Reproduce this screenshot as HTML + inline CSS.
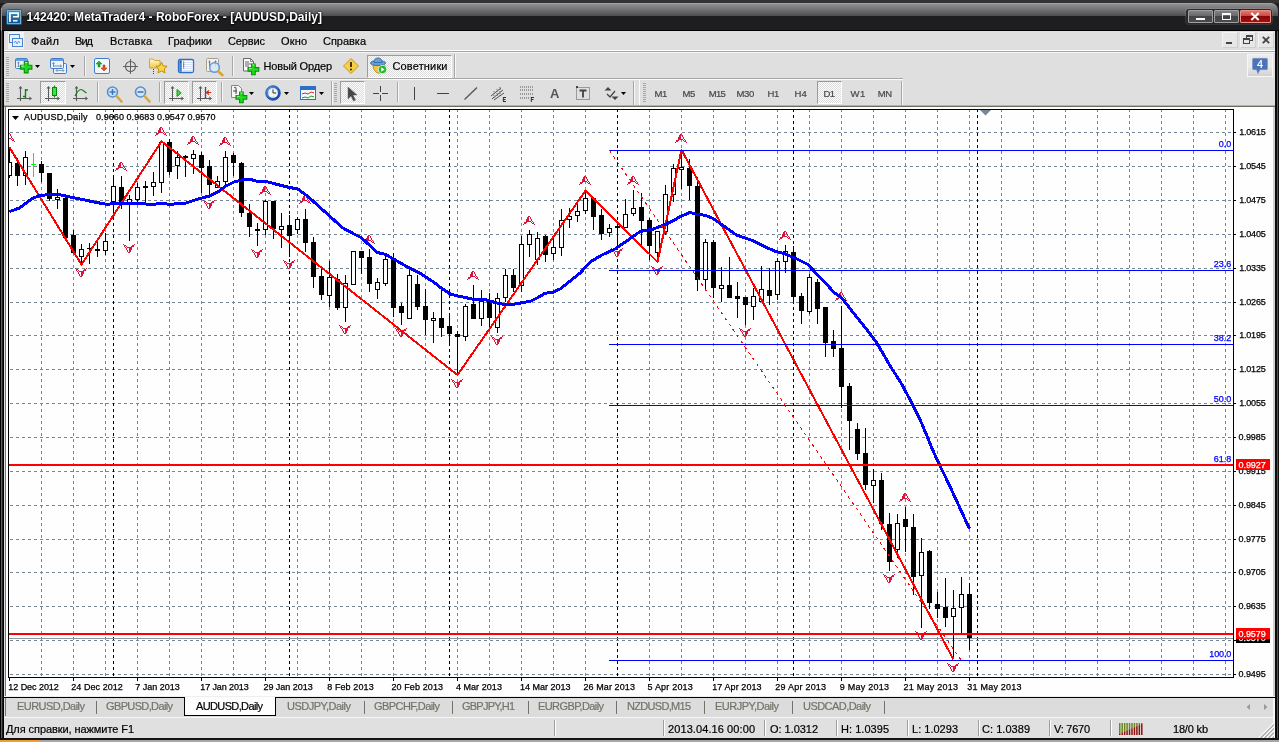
<!DOCTYPE html><html><head><meta charset="utf-8"><title>MT4</title><style>
html,body{margin:0;padding:0}body{width:1279px;height:742px;overflow:hidden;position:relative;background:#1f1f21;font-family:"Liberation Sans",sans-serif;}
div{box-sizing:border-box}
</style></head><body><div id="w" style="position:absolute;left:0;top:0;width:1279px;height:742px;opacity:0.999">
<div style="position:absolute;left:0px;top:0px;width:1279px;height:3px;background:#353535;"></div>
<div style="position:absolute;left:0px;top:3px;width:1279px;height:28px;background:#1f1f21;border-radius:7px 7px 0 0;"></div>
<svg style="position:absolute;left:0;top:3px" width="1279" height="14" viewBox="0 0 1279 14"><defs><linearGradient id="tg" x1="0" y1="0" x2="0" y2="1"><stop offset="0" stop-color="#929294"/><stop offset="1" stop-color="#4e4e50"/></linearGradient><clipPath id="tc"><rect x="1" y="0" width="1277" height="40" rx="7"/></clipPath></defs><g clip-path="url(#tc)"><path d="M0 1H1279V13H0Z" fill="url(#tg)"/><rect x="0" y="0" width="1279" height="1" fill="#a2a2a4"/></g></svg>
<div style="position:absolute;left:0px;top:30px;width:1279px;height:1px;background:#000;"></div>
<svg style="position:absolute;left:6px;top:9px" width="16" height="16" viewBox="0 0 16 16"><defs><linearGradient id="ig" x1="0" y1="0" x2="0" y2="1"><stop offset="0" stop-color="#4a98c8"/><stop offset="1" stop-color="#0c4c84"/></linearGradient></defs><rect x="0.5" y="0.5" width="15" height="15" rx="1" fill="url(#ig)" stroke="#1c5c8c"/><rect x="1.5" y="1.5" width="13" height="13" fill="none" stroke="#8cc4e4" stroke-opacity="0.8"/><path d="M3 13V3.300H13V8.600H7V7H11.400V5H4.800V13Z" fill="#fff"/><rect x="7" y="11" width="4.500" height="1.600" fill="#e8f4ff"/></svg>
<div style="position:absolute;left:1186px;top:9px;width:86px;height:15px;background:#2a2a2c;border-radius:3px;box-shadow:0 0 0 1px rgba(255,255,255,.10)"></div>
<div style="position:absolute;left:1188px;top:10px;width:25px;height:13px;background:linear-gradient(#838386,#68686a 46%,#454547 50%,#4c4c4e);border:1px solid #a2a2a4;border-radius:1px"></div><div style="position:absolute;left:1196px;top:18px;width:9px;height:2px;background:#fff"></div>
<div style="position:absolute;left:1214px;top:10px;width:25px;height:13px;background:linear-gradient(#838386,#68686a 46%,#454547 50%,#4c4c4e);border:1px solid #a2a2a4;border-radius:1px"></div><div style="position:absolute;left:1222px;top:13px;width:9px;height:7px;border:1px solid #fff;border-top-width:2px"></div>
<div style="position:absolute;left:1240px;top:10px;width:31px;height:13px;background:linear-gradient(#e07a70,#c84a40 46%,#8c0806 50%,#9a1410);border:1px solid #f09088;border-radius:1px"></div><svg style="position:absolute;left:1250px;top:12px" width="10" height="9" viewBox="0 0 10 9"><path d="M1.300 1L8.700 8M8.700 1L1.300 8" stroke="#fff" stroke-width="2"/></svg>
<div style="position:absolute;left:4px;top:31px;width:1271px;height:707px;background:#e0e0e0;"></div>
<div style="position:absolute;left:1px;top:8px;width:1px;height:730px;background:#5e5e60;"></div>
<div style="position:absolute;left:1px;top:8px;width:1px;height:23px;background:#98989a;"></div>
<div style="position:absolute;left:0px;top:31px;width:1px;height:711px;background:#000;"></div>
<div style="position:absolute;left:3px;top:31px;width:1px;height:707px;background:#000;"></div>
<div style="position:absolute;left:1275px;top:31px;width:4px;height:711px;background:#0c0c0c;"></div>
<div style="position:absolute;left:1277px;top:31px;width:1px;height:707px;background:#58585a;"></div>
<div style="position:absolute;left:0px;top:738px;width:1279px;height:4px;background:#141414;"></div>
<div style="position:absolute;left:0px;top:740px;width:1279px;height:2px;background:#a8a8a8;"></div>
<div style="position:absolute;left:0px;top:740px;width:39px;height:2px;background:#f0a030;"></div>
<div style="position:absolute;left:4px;top:50px;width:1271px;height:1px;background:#fff;"></div>
<div style="position:absolute;left:4px;top:51px;width:1271px;height:1px;background:#a6a6a6;"></div>
<div style="position:absolute;left:4px;top:52px;width:1271px;height:1px;background:#f6f6f6;"></div>
<div style="position:absolute;left:8px;top:32px;width:16px;height:17px;background:#f4f4f4;"></div>
<svg style="position:absolute;left:8px;top:33px" width="16" height="16" viewBox="0 0 16 16"><rect x="1.5" y="1.5" width="10" height="8" fill="#eaf2ff" stroke="#4a86d8"/><rect x="4.5" y="5.5" width="10" height="8" fill="#eaf2ff" stroke="#4a86d8"/><path d="M6 10l1.5-2 1.5 3 1.5-3 1.5 2" stroke="#4a86d8" fill="none" stroke-width="0.8"/></svg>
<div style="position:absolute;left:1222px;top:32px;width:16px;height:16px;background:#e8e8e8;border:1px solid #f4f4f4;border-right-color:#d0d0d0;border-bottom-color:#d0d0d0"></div><div style="position:absolute;left:1226px;top:42px;width:6px;height:2px;background:#444"></div>
<div style="position:absolute;left:1240px;top:32px;width:16px;height:16px;background:#e8e8e8;border:1px solid #f4f4f4;border-right-color:#d0d0d0;border-bottom-color:#d0d0d0"></div><div style="position:absolute;left:1246px;top:35px;width:7px;height:6px;border:1px solid #444;border-top-width:2px"></div><div style="position:absolute;left:1243px;top:38px;width:7px;height:6px;border:1px solid #444;border-top-width:2px;background:#e8e8e8"></div>
<div style="position:absolute;left:1258px;top:32px;width:16px;height:16px;background:#e8e8e8;border:1px solid #f4f4f4;border-right-color:#d0d0d0;border-bottom-color:#d0d0d0"></div><svg style="position:absolute;left:1262px;top:36px" width="8" height="8" viewBox="0 0 8 8"><path d="M0.8 0.8L7.2 7.2M7.2 0.8L0.8 7.2" stroke="#444" stroke-width="1.8"/></svg>
<div style="position:absolute;left:4px;top:78px;width:899px;height:1px;background:#a6a6a6;"></div>
<div style="position:absolute;left:4px;top:79px;width:899px;height:1px;background:#fbfbfb;"></div>
<div style="position:absolute;left:4px;top:105px;width:1271px;height:1px;background:#b4b4b4;"></div>
<div style="position:absolute;left:4px;top:106px;width:1271px;height:1px;background:#6e6e62;"></div>
<div style="position:absolute;left:6px;top:57px;width:3px;height:20px;background:repeating-linear-gradient(#a8a8a8 0 1px,transparent 1px 2px)"></div>
<div style="position:absolute;left:6px;top:83px;width:3px;height:20px;background:repeating-linear-gradient(#a8a8a8 0 1px,transparent 1px 2px)"></div>
<div style="position:absolute;left:334px;top:83px;width:3px;height:20px;background:repeating-linear-gradient(#a8a8a8 0 1px,transparent 1px 2px)"></div>
<div style="position:absolute;left:643px;top:83px;width:3px;height:20px;background:repeating-linear-gradient(#a8a8a8 0 1px,transparent 1px 2px)"></div>
<div style="position:absolute;left:84px;top:56px;width:1px;height:20px;background:#a8a8a8;"></div><div style="position:absolute;left:85px;top:56px;width:1px;height:20px;background:#f8f8f8;"></div>
<div style="position:absolute;left:232px;top:56px;width:1px;height:20px;background:#a8a8a8;"></div><div style="position:absolute;left:233px;top:56px;width:1px;height:20px;background:#f8f8f8;"></div>
<div style="position:absolute;left:97px;top:82px;width:1px;height:20px;background:#a8a8a8;"></div><div style="position:absolute;left:98px;top:82px;width:1px;height:20px;background:#f8f8f8;"></div>
<div style="position:absolute;left:159px;top:82px;width:1px;height:20px;background:#a8a8a8;"></div><div style="position:absolute;left:160px;top:82px;width:1px;height:20px;background:#f8f8f8;"></div>
<div style="position:absolute;left:221px;top:82px;width:1px;height:20px;background:#a8a8a8;"></div><div style="position:absolute;left:222px;top:82px;width:1px;height:20px;background:#f8f8f8;"></div>
<div style="position:absolute;left:397px;top:82px;width:1px;height:20px;background:#a8a8a8;"></div><div style="position:absolute;left:398px;top:82px;width:1px;height:20px;background:#f8f8f8;"></div>
<div style="position:absolute;left:454px;top:54px;width:1px;height:24px;background:#a8a8a8;"></div><div style="position:absolute;left:455px;top:54px;width:1px;height:24px;background:#f8f8f8;"></div>
<div style="position:absolute;left:331px;top:81px;width:1px;height:24px;background:#a8a8a8;"></div><div style="position:absolute;left:332px;top:81px;width:1px;height:24px;background:#f8f8f8;"></div>
<div style="position:absolute;left:633px;top:81px;width:1px;height:24px;background:#a8a8a8;"></div><div style="position:absolute;left:634px;top:81px;width:1px;height:24px;background:#f8f8f8;"></div>
<div style="position:absolute;left:901px;top:81px;width:1px;height:24px;background:#a8a8a8;"></div><div style="position:absolute;left:902px;top:81px;width:1px;height:24px;background:#f8f8f8;"></div>
<div style="position:absolute;left:639px;top:80px;width:1px;height:25px;background:#fbfbfb;"></div>
<div style="position:absolute;left:40px;top:81px;width:26px;height:23px;border:1px solid #9c9c9c;border-right-color:#fff;border-bottom-color:#fff;background:repeating-conic-gradient(#fff 0 25%,#dcdcdc 0 50%) 0 0/2px 2px"></div>
<div style="position:absolute;left:164px;top:81px;width:25px;height:23px;border:1px solid #9c9c9c;border-right-color:#fff;border-bottom-color:#fff;background:repeating-conic-gradient(#fff 0 25%,#dcdcdc 0 50%) 0 0/2px 2px"></div>
<div style="position:absolute;left:192px;top:81px;width:25px;height:23px;border:1px solid #9c9c9c;border-right-color:#fff;border-bottom-color:#fff;background:repeating-conic-gradient(#fff 0 25%,#dcdcdc 0 50%) 0 0/2px 2px"></div>
<div style="position:absolute;left:340px;top:81px;width:25px;height:23px;border:1px solid #9c9c9c;border-right-color:#fff;border-bottom-color:#fff;background:repeating-conic-gradient(#fff 0 25%,#dcdcdc 0 50%) 0 0/2px 2px"></div>
<div style="position:absolute;left:817px;top:81px;width:25px;height:23px;border:1px solid #9c9c9c;border-right-color:#fff;border-bottom-color:#fff;background:repeating-conic-gradient(#fff 0 25%,#dcdcdc 0 50%) 0 0/2px 2px"></div>
<div style="position:absolute;left:367px;top:55px;width:85px;height:23px;border:1px solid #9c9c9c;border-right-color:#fff;border-bottom-color:#fff;background:repeating-conic-gradient(#fff 0 25%,#dcdcdc 0 50%) 0 0/2px 2px"></div>
<svg style="position:absolute;left:35px;top:65px" width="5" height="3" viewBox="0 0 5 3"><path d="M0 0H5L2.5 3Z" fill="#000"/></svg>
<svg style="position:absolute;left:70px;top:65px" width="5" height="3" viewBox="0 0 5 3"><path d="M0 0H5L2.5 3Z" fill="#000"/></svg>
<svg style="position:absolute;left:249px;top:92px" width="5" height="3" viewBox="0 0 5 3"><path d="M0 0H5L2.5 3Z" fill="#000"/></svg>
<svg style="position:absolute;left:284px;top:92px" width="5" height="3" viewBox="0 0 5 3"><path d="M0 0H5L2.5 3Z" fill="#000"/></svg>
<svg style="position:absolute;left:319px;top:92px" width="5" height="3" viewBox="0 0 5 3"><path d="M0 0H5L2.5 3Z" fill="#000"/></svg>
<svg style="position:absolute;left:621px;top:92px" width="5" height="3" viewBox="0 0 5 3"><path d="M0 0H5L2.5 3Z" fill="#000"/></svg>
<svg style="position:absolute;left:15px;top:58px;overflow:visible" width="16" height="16" viewBox="0 0 16 16"><rect x="0.5" y="0.5" width="12" height="10" rx="1.2" fill="#eef4fc" stroke="#3f7fd0"/><rect x="1" y="1" width="11" height="2" fill="#6a9ee0"/><path d="M3.500 4v5M2.300 5.200l1.200-1.200 1.200 1.200M2.300 7.800l1.200 1.200 1.200-1.200" stroke="#6a86a8" fill="none" stroke-width="0.900"/><path transform="translate(5.5 3.5) scale(0.95)" d="M0 4h4v-4h4v4h4v4h-4v4h-4v-4h-4z" fill="#22dd22" stroke="#0a8f0a" stroke-width="1.2"/><path transform="translate(5.5 3.5) scale(0.95)" d="M4.800 1h2.400M1 4.800h3" stroke="#b8ffb8" stroke-width="1" fill="none"/></svg>
<svg style="position:absolute;left:50px;top:58px;overflow:visible" width="18" height="16" viewBox="0 0 18 16"><rect x="3.500" y="5.500" width="13" height="10" rx="1.200" fill="#eef4fc" stroke="#3f7fd0"/><path d="M6 12.500h8M7.500 11l-1.500 1.500 1.500 1.500M12.500 11l1.500 1.500-1.500 1.500" stroke="#7a96b8" fill="none" stroke-width="0.900"/><rect x="0.500" y="0.500" width="13" height="10" rx="1.200" fill="#eef4fc" stroke="#3f7fd0"/><rect x="1" y="1" width="12" height="2" fill="#6a9ee0"/><path d="M3.500 4.500v4.500M2.300 5.700l1.200-1.200 1.200 1.200M3.500 8h8M10 6.700l1.500 1.300-1.500 1.300" stroke="#6a86a8" fill="none" stroke-width="0.900"/></svg>
<svg style="position:absolute;left:94px;top:58px;overflow:visible" width="16" height="16" viewBox="0 0 16 16"><rect x="0.5" y="0.5" width="15" height="15" rx="1.5" fill="#f4f8ff" stroke="#3f7fd0"/><path d="M5 3l3 3h-2v3h-2v-3h-2z" fill="#22b322" stroke="#0a7a0a" stroke-width="0.5"/><path d="M10 13l-3-3h2v-3h2v3h2z" fill="#f05020" stroke="#a03010" stroke-width="0.5"/></svg>
<svg style="position:absolute;left:123px;top:59px;overflow:visible" width="15" height="15" viewBox="0 0 15 15"><circle cx="7.500" cy="7.500" r="5" fill="none" stroke="#606060" stroke-width="1.100"/><path d="M7.500 0v15M0 7.500h15" stroke="#606060" stroke-width="1"/></svg>
<svg style="position:absolute;left:149px;top:57px;overflow:visible" width="19" height="17" viewBox="0 0 19 17"><defs><linearGradient id="fg" x1="0" y1="0" x2="0" y2="1"><stop offset="0" stop-color="#fffbd0"/><stop offset="1" stop-color="#f2c84a"/></linearGradient></defs><path d="M0.500 2h3.500l1.500 1.500h5.500v7.500h-10.500z" fill="url(#fg)" stroke="#d0a838"/><path d="M12.500 5.200l1.700 3.600 3.900 0.500-2.900 2.700 0.800 3.900-3.500-2-3.500 2 0.800-3.900-2.900-2.700 3.900-0.500z" fill="#fad648" stroke="#b8860b" stroke-width="0.900"/><path d="M4.500 12v5" stroke="#444" stroke-dasharray="1 1"/></svg>
<svg style="position:absolute;left:178px;top:59px;overflow:visible" width="16" height="14" viewBox="0 0 16 14"><rect x="0.500" y="0.500" width="15" height="13" rx="1.500" fill="#fff" stroke="#2f6fc8" stroke-width="1.300"/><rect x="1.200" y="1.200" width="2.600" height="11.600" fill="#3f7fd8"/><path d="M5 3.500h9.500M5 5.500h9.500M5 7.500h9.500M5 9.500h9.500M5 11.500h9.500" stroke="#c8daf4" stroke-width="0.800"/><path d="M5 3h1.200M5 9h1.200" stroke="#e02020" stroke-width="1.200"/><path d="M5 5h1.200M5 7h1.200M2 3h1.200" stroke="#222" stroke-width="1.200"/></svg>
<svg style="position:absolute;left:206px;top:58px;overflow:visible" width="18" height="18" viewBox="0 0 18 18"><rect x="0.500" y="0.500" width="12" height="13" rx="1" fill="#f4f2ec" stroke="#a8a090"/><path d="M3.500 2.500v7M9.500 2.500v6M2.500 4h2M8.500 3.500h2" stroke="#5878a8" stroke-width="0.900"/><circle cx="8.500" cy="9.500" r="4.800" fill="#d4e8f8" fill-opacity="0.850" stroke="#6a9ad8" stroke-width="1.500"/><path d="M12.200 13.200l4.300 4" stroke="#d8a828" stroke-width="2.600" stroke-linecap="round"/></svg>
<svg style="position:absolute;left:243px;top:58px;overflow:visible" width="16" height="16" viewBox="0 0 16 16"><path d="M0.500 0.500h7l3 3v9.500h-10z" fill="#fafafa" stroke="#6a6a6a"/><path d="M7.500 0.500v3h3" fill="none" stroke="#6a6a6a" stroke-width="0.800"/><path d="M2 4h4M2 6h6.500M2 8h4" stroke="#555" stroke-width="0.900"/><path transform="translate(5 6) scale(0.9)" d="M0 4h4v-4h4v4h4v4h-4v4h-4v-4h-4z" fill="#22dd22" stroke="#0a8f0a" stroke-width="1.2"/><path transform="translate(5 6) scale(0.9)" d="M4.800 1h2.400M1 4.800h3" stroke="#b8ffb8" stroke-width="1" fill="none"/></svg>
<svg style="position:absolute;left:343px;top:58px;overflow:visible" width="16" height="16" viewBox="0 0 16 16"><path d="M8 0.500l7.500 7.500-7.500 7.500-7.500-7.500z" fill="#f8d048" stroke="#c89818"/><path d="M8 4v5" stroke="#503000" stroke-width="2"/><circle cx="8" cy="11.500" r="1.100" fill="#503000"/></svg>
<svg style="position:absolute;left:370px;top:57px;overflow:visible" width="17" height="17" viewBox="0 0 17 17"><path d="M3 8c0 5 3 8 6 8s6-3 6-8z" fill="#f0c848" stroke="#b89020"/><ellipse cx="8" cy="6" rx="7.500" ry="2.500" fill="#6aa0d8" stroke="#3870b0"/><path d="M4 5.500c0-3 1.500-4.500 4-4.500s4 1.500 4 4.500z" fill="#6aa0d8" stroke="#3870b0"/><circle cx="12.500" cy="12.500" r="4.200" fill="#28b828" stroke="#e8ffe8" stroke-width="0.800"/><path d="M11.200 10.300l3.400 2.200-3.400 2.200z" fill="#fff"/></svg>
<div style="position:absolute;left:1247px;top:54px;width:26px;height:23px;background:linear-gradient(#ececec 55%,#d2d2d2);border:1px solid #f8f8f8"></div>
<svg style="position:absolute;left:1252px;top:58px;overflow:visible" width="16" height="16" viewBox="0 0 16 16"><path d="M1.500 0.300h13a1 1 0 0 1 1 1v9.400a1 1 0 0 1-1 1h-6.500l-2 4-1.500-4h-3a1 1 0 0 1-1-1v-9.400a1 1 0 0 1 1-1z" fill="#4e74b8" stroke="#7a98cc" stroke-width="0.600"/></svg>
<svg style="position:absolute;left:17px;top:86px;overflow:visible" width="16" height="16" viewBox="0 0 16 16"><path d="M3.500 1v14M0 12.500h14" fill="none" stroke="#5a5a5a" stroke-width="1.100"/><path d="M3.500 0l2 2.600h-4zM15 12.500l-2.600 2v-4z" fill="#5a5a5a"/><path d="M8.500 3v9M8.500 4h2.500M6 10.500h2.500" stroke="#0a8a0a" stroke-width="1.400" fill="none"/></svg>
<svg style="position:absolute;left:45px;top:86px;overflow:visible" width="16" height="16" viewBox="0 0 16 16"><path d="M3.500 1v14M0 12.500h14" fill="none" stroke="#5a5a5a" stroke-width="1.100"/><path d="M3.500 0l2 2.600h-4zM15 12.500l-2.600 2v-4z" fill="#5a5a5a"/><path d="M9.500 -0.500v12" stroke="#0a8a0a" stroke-width="1.200"/><rect x="7.500" y="1.500" width="4" height="8" fill="#40e050" stroke="#0a8a0a"/></svg>
<svg style="position:absolute;left:73px;top:86px;overflow:visible" width="16" height="16" viewBox="0 0 16 16"><path d="M3.500 1v14M0 12.500h14" fill="none" stroke="#5a5a5a" stroke-width="1.100"/><path d="M3.500 0l2 2.600h-4zM15 12.500l-2.600 2v-4z" fill="#5a5a5a"/><path d="M2 10c2-4 4-6.500 6-6.500s3 2 5.500 3.500" stroke="#0a8a0a" stroke-width="1.200" fill="none"/></svg>
<svg style="position:absolute;left:106px;top:86px;overflow:visible" width="17" height="17" viewBox="0 0 17 17"><circle cx="6.500" cy="6" r="5" fill="#d4e6f8" stroke="#5a90d0" stroke-width="1.600"/><path d="M3.500 6h6M6.500 3v6" stroke="#3a78c8" stroke-width="1.600"/><path d="M10.500 10l5 5.500" stroke="#d8a838" stroke-width="2.600" stroke-linecap="round"/></svg>
<svg style="position:absolute;left:134px;top:86px;overflow:visible" width="17" height="17" viewBox="0 0 17 17"><circle cx="6.500" cy="6" r="5" fill="#d4e6f8" stroke="#5a90d0" stroke-width="1.600"/><path d="M3.500 6h6" stroke="#3a78c8" stroke-width="1.600"/><path d="M10.500 10l5 5.500" stroke="#d8a838" stroke-width="2.600" stroke-linecap="round"/></svg>
<svg style="position:absolute;left:169px;top:86px;overflow:visible" width="16" height="16" viewBox="0 0 16 16"><path d="M3.500 1v14M0 12.500h14" fill="none" stroke="#5a5a5a" stroke-width="1.100"/><path d="M3.500 0l2 2.600h-4zM15 12.500l-2.600 2v-4z" fill="#5a5a5a"/><path d="M8 3.500l4.200 3.500-4.200 3.500z" fill="#48dc48" stroke="#0a8a0a" stroke-width="0.900"/></svg>
<svg style="position:absolute;left:197px;top:86px;overflow:visible" width="16" height="16" viewBox="0 0 16 16"><path d="M3.500 1v14M0 12.500h14" fill="none" stroke="#5a5a5a" stroke-width="1.100"/><path d="M3.500 0l2 2.600h-4zM15 12.500l-2.600 2v-4z" fill="#5a5a5a"/><path d="M8.500 1v11" stroke="#2060a0" stroke-width="1.400"/><path d="M14 6.500h-4M12 4.500l-2.500 2 2.500 2" stroke="#d03010" stroke-width="1.200" fill="none"/></svg>
<svg style="position:absolute;left:231px;top:85px;overflow:visible" width="16" height="16" viewBox="0 0 16 16"><path d="M0.500 0.500h7l3 3v9h-10z" fill="#f8f8f8" stroke="#888"/><path d="M3 3c1-1 2-1 2 0v6M2 6h4" stroke="#333" stroke-width="0.900" fill="none"/><path transform="translate(5 7) scale(0.9)" d="M0 4h4v-4h4v4h4v4h-4v4h-4v-4h-4z" fill="#22dd22" stroke="#0a8f0a" stroke-width="1.2"/><path transform="translate(5 7) scale(0.9)" d="M4.800 1h2.400M1 4.800h3" stroke="#b8ffb8" stroke-width="1" fill="none"/></svg>
<svg style="position:absolute;left:265px;top:85px;overflow:visible" width="16" height="16" viewBox="0 0 16 16"><defs><linearGradient id="cg" x1="0" y1="0" x2="1" y2="1"><stop offset="0" stop-color="#6ab0f8"/><stop offset="0.5" stop-color="#2a6ad0"/><stop offset="1" stop-color="#0c3a98"/></linearGradient></defs><circle cx="8" cy="8" r="7.300" fill="url(#cg)" stroke="#1a4aa0" stroke-width="0.800"/><circle cx="8" cy="8" r="5" fill="#f6f6f6"/><path d="M8 3.600v0.800M8 11.600v0.800M3.600 8h0.800M11.600 8h0.800" stroke="#888" stroke-width="0.800"/><path d="M8 4.500v3.500h3" stroke="#333" stroke-width="1" fill="none"/></svg>
<svg style="position:absolute;left:300px;top:86px;overflow:visible" width="16" height="16" viewBox="0 0 16 16"><rect x="0.500" y="0.500" width="15" height="13" fill="#f4f8ff" stroke="#2f6fc8"/><rect x="1" y="1" width="14" height="3" fill="#2f6fc8"/><path d="M2 8l3-1 3 1 3-2 3 1" stroke="#d03010" fill="none"/><path d="M2 12l3-1 3 1 3-2 3 1" stroke="#18a018" fill="none"/></svg>
<svg style="position:absolute;left:347px;top:87px;overflow:visible" width="10" height="15" viewBox="0 0 10 15"><path d="M1 0v12l3-3 2.500 5 2-1-2.500-5h4z" fill="#484848" stroke="#666" stroke-width="0.500"/></svg>
<svg style="position:absolute;left:373px;top:86px;overflow:visible" width="15" height="15" viewBox="0 0 15 15"><path d="M7.500 0v6M7.500 9v6M0 7.500h6M9 7.500h6" stroke="#444" stroke-width="1"/></svg>
<div style="position:absolute;left:414px;top:87px;width:1px;height:13px;background:#444;"></div>
<div style="position:absolute;left:437px;top:93px;width:12px;height:1px;background:#444;"></div>
<svg style="position:absolute;left:464px;top:87px;overflow:visible" width="14" height="13" viewBox="0 0 14 13"><path d="M0.500 12.500L13 0.500" stroke="#555" stroke-width="1.300"/></svg>
<svg style="position:absolute;left:490px;top:85px;overflow:visible" width="17" height="17" viewBox="0 0 17 17"><path d="M1 11L11 3M2 14L13 5M4 15L14 8" stroke="#555" stroke-width="1"/><path d="M4 6v8M7 4v8M10 2v9" stroke="#555" stroke-width="0.800" stroke-dasharray="1 1"/><path d="M13 12.500h3M13 14.500h2.500M13 16.500h3M13.300 12.500v4" stroke="#333" stroke-width="1" fill="none"/></svg>
<svg style="position:absolute;left:520px;top:86px;overflow:visible" width="15" height="16" viewBox="0 0 15 16"><path d="M0 1h13M0 4h13M0 8h13M0 12h9" stroke="#555" stroke-width="1" stroke-dasharray="1 1"/><path d="M11.300 11v5M11 11.500h3M11 13.500h2.500" stroke="#333" stroke-width="1" fill="none"/></svg>
<svg style="position:absolute;left:576px;top:86px;overflow:visible" width="14" height="14" viewBox="0 0 14 14"><rect x="0.500" y="1.500" width="13" height="12" fill="none" stroke="#555" stroke-dasharray="1 1"/><path d="M3.500 4.500h7M7 4.500v7" stroke="#444" stroke-width="1.800"/><rect x="0" y="0" width="2" height="2" fill="#444"/></svg>
<svg style="position:absolute;left:604px;top:87px;overflow:visible" width="15" height="13" viewBox="0 0 15 13"><path d="M4 0l3.500 3.500h-7zM11 13l-3.500-3.500h7z" fill="#444"/><path d="M3 7l3 3 5-6" stroke="#444" stroke-width="1.300" fill="none"/></svg>
<div style="position:absolute;left:5px;top:107px;width:1px;height:589px;background:#78786a;"></div>
<div style="position:absolute;left:6px;top:107px;width:1267px;height:589px;background:#fff;"></div>
<div style="position:absolute;left:1273px;top:107px;width:2px;height:631px;background:#d0d0d0;"></div>
<div style="position:absolute;left:8px;top:109px;width:1226px;height:1px;background:#000;"></div>
<div style="position:absolute;left:8px;top:109px;width:1px;height:569px;background:#000;"></div>
<div style="position:absolute;left:1233px;top:109px;width:1px;height:569px;background:#000;"></div>
<div style="position:absolute;left:8px;top:677px;width:1226px;height:1px;background:#000;"></div>
<svg width="1279" height="742" viewBox="0 0 1279 742" style="position:absolute;left:0;top:0">
<defs><clipPath id="cc"><rect x="9" y="110" width="1224" height="567"/></clipPath></defs>
<g clip-path="url(#cc)">
<g shape-rendering="crispEdges" stroke="#778899" stroke-width="1" stroke-dasharray="3 3" fill="none">
<path d="M41.5 109V677"/>
<path d="M73.5 109V677"/>
<path d="M105.5 109V677"/>
<path d="M137.5 109V677"/>
<path d="M169.5 109V677"/>
<path d="M201.5 109V677"/>
<path d="M233.5 109V677"/>
<path d="M265.5 109V677"/>
<path d="M297.5 109V677"/>
<path d="M329.5 109V677"/>
<path d="M361.5 109V677"/>
<path d="M393.5 109V677"/>
<path d="M425.5 109V677"/>
<path d="M457.5 109V677"/>
<path d="M489.5 109V677"/>
<path d="M521.5 109V677"/>
<path d="M553.5 109V677"/>
<path d="M585.5 109V677"/>
<path d="M617.5 109V677"/>
<path d="M649.5 109V677"/>
<path d="M681.5 109V677"/>
<path d="M713.5 109V677"/>
<path d="M745.5 109V677"/>
<path d="M777.5 109V677"/>
<path d="M809.5 109V677"/>
<path d="M841.5 109V677"/>
<path d="M873.5 109V677"/>
<path d="M905.5 109V677"/>
<path d="M937.5 109V677"/>
<path d="M969.5 109V677"/>
<path d="M1001.5 109V677"/>
<path d="M1033.5 109V677"/>
<path d="M1065.5 109V677"/>
<path d="M1097.5 109V677"/>
<path d="M1129.5 109V677"/>
<path d="M1161.5 109V677"/>
<path d="M1193.5 109V677"/>
<path d="M1225.5 109V677"/>
<path d="M10 132.5H1233"/>
<path d="M10 166.5H1233"/>
<path d="M10 200.5H1233"/>
<path d="M10 234.5H1233"/>
<path d="M10 268.5H1233"/>
<path d="M10 302.5H1233"/>
<path d="M10 335.5H1233"/>
<path d="M10 369.5H1233"/>
<path d="M10 403.5H1233"/>
<path d="M10 437.5H1233"/>
<path d="M10 471.5H1233"/>
<path d="M10 505.5H1233"/>
<path d="M10 539.5H1233"/>
<path d="M10 572.5H1233"/>
<path d="M10 606.5H1233"/>
<path d="M10 640.5H1233"/>
<path d="M10 674.5H1233"/>
</g>
<g shape-rendering="crispEdges" stroke="#000" stroke-width="1" stroke-dasharray="3 3" fill="none">
<path d="M113.5 109V677"/>
<path d="M289.5 109V677"/>
<path d="M449.5 109V677"/>
<path d="M617.5 109V677"/>
<path d="M793.5 109V677"/>
<path d="M977.5 109V677"/>
</g>
<rect x="9" y="638" width="1224" height="1" fill="#8c98a4" shape-rendering="crispEdges"/>
<g shape-rendering="crispEdges">
<rect x="9" y="148" width="1" height="30" fill="#000"/>
<rect x="9" y="162" width="3" height="14" fill="#000"/>
<rect x="9" y="163" width="2" height="12" fill="#fff"/>
<rect x="17" y="158" width="1" height="28" fill="#000"/>
<rect x="15" y="163" width="5" height="13" fill="#000"/>
<rect x="25" y="151" width="1" height="34" fill="#000"/>
<rect x="23" y="157" width="5" height="19" fill="#000"/>
<rect x="24" y="158" width="3" height="17" fill="#fff"/>
<rect x="33" y="153" width="1" height="24" fill="#00ff00"/>
<rect x="31" y="164" width="5" height="1" fill="#00ff00"/>
<rect x="41" y="161" width="1" height="21" fill="#000"/>
<rect x="39" y="164" width="5" height="9" fill="#000"/>
<rect x="49" y="173" width="1" height="28" fill="#000"/>
<rect x="47" y="173" width="5" height="26" fill="#000"/>
<rect x="57" y="189" width="1" height="20" fill="#000"/>
<rect x="55" y="197" width="5" height="3" fill="#000"/>
<rect x="56" y="198" width="3" height="1" fill="#fff"/>
<rect x="65" y="198" width="1" height="42" fill="#000"/>
<rect x="63" y="198" width="5" height="40" fill="#000"/>
<rect x="73" y="230" width="1" height="23" fill="#000"/>
<rect x="71" y="235" width="5" height="18" fill="#000"/>
<rect x="81" y="244" width="1" height="20" fill="#000"/>
<rect x="79" y="249" width="5" height="8" fill="#000"/>
<rect x="80" y="250" width="3" height="6" fill="#fff"/>
<rect x="89" y="243" width="1" height="21" fill="#000"/>
<rect x="87" y="248" width="5" height="1" fill="#000"/>
<rect x="97" y="242" width="1" height="15" fill="#000"/>
<rect x="95" y="249" width="5" height="2" fill="#000"/>
<rect x="105" y="233" width="1" height="22" fill="#000"/>
<rect x="103" y="241" width="5" height="10" fill="#000"/>
<rect x="104" y="242" width="3" height="8" fill="#fff"/>
<rect x="113" y="175" width="1" height="45" fill="#000"/>
<rect x="111" y="186" width="5" height="16" fill="#000"/>
<rect x="112" y="187" width="3" height="14" fill="#fff"/>
<rect x="121" y="176" width="1" height="33" fill="#000"/>
<rect x="119" y="187" width="5" height="15" fill="#000"/>
<rect x="129" y="195" width="1" height="46" fill="#000"/>
<rect x="127" y="199" width="5" height="5" fill="#000"/>
<rect x="128" y="200" width="3" height="3" fill="#fff"/>
<rect x="137" y="183" width="1" height="20" fill="#000"/>
<rect x="135" y="187" width="5" height="13" fill="#000"/>
<rect x="136" y="188" width="3" height="11" fill="#fff"/>
<rect x="145" y="181" width="1" height="22" fill="#000"/>
<rect x="143" y="186" width="5" height="2" fill="#000"/>
<rect x="153" y="172" width="1" height="24" fill="#000"/>
<rect x="151" y="182" width="5" height="5" fill="#000"/>
<rect x="152" y="183" width="3" height="3" fill="#fff"/>
<rect x="161" y="142" width="1" height="51" fill="#000"/>
<rect x="159" y="142" width="5" height="41" fill="#000"/>
<rect x="160" y="143" width="3" height="39" fill="#fff"/>
<rect x="169" y="139" width="1" height="36" fill="#000"/>
<rect x="167" y="142" width="5" height="30" fill="#000"/>
<rect x="177" y="151" width="1" height="28" fill="#000"/>
<rect x="175" y="157" width="5" height="9" fill="#000"/>
<rect x="176" y="158" width="3" height="7" fill="#fff"/>
<rect x="185" y="155" width="1" height="22" fill="#000"/>
<rect x="183" y="156" width="5" height="2" fill="#000"/>
<rect x="193" y="150" width="1" height="24" fill="#000"/>
<rect x="191" y="154" width="5" height="5" fill="#000"/>
<rect x="192" y="155" width="3" height="3" fill="#fff"/>
<rect x="201" y="152" width="1" height="41" fill="#000"/>
<rect x="199" y="155" width="5" height="13" fill="#000"/>
<rect x="209" y="160" width="1" height="35" fill="#000"/>
<rect x="207" y="166" width="5" height="19" fill="#000"/>
<rect x="217" y="176" width="1" height="12" fill="#000"/>
<rect x="215" y="181" width="5" height="7" fill="#000"/>
<rect x="216" y="182" width="3" height="5" fill="#fff"/>
<rect x="225" y="151" width="1" height="34" fill="#000"/>
<rect x="223" y="157" width="5" height="25" fill="#000"/>
<rect x="224" y="158" width="3" height="23" fill="#fff"/>
<rect x="233" y="153" width="1" height="23" fill="#000"/>
<rect x="231" y="155" width="5" height="8" fill="#000"/>
<rect x="241" y="162" width="1" height="55" fill="#000"/>
<rect x="239" y="163" width="5" height="50" fill="#000"/>
<rect x="249" y="204" width="1" height="33" fill="#000"/>
<rect x="247" y="213" width="5" height="14" fill="#000"/>
<rect x="257" y="223" width="1" height="23" fill="#000"/>
<rect x="255" y="229" width="5" height="2" fill="#000"/>
<rect x="265" y="200" width="1" height="35" fill="#000"/>
<rect x="263" y="201" width="5" height="29" fill="#000"/>
<rect x="264" y="202" width="3" height="27" fill="#fff"/>
<rect x="273" y="201" width="1" height="38" fill="#000"/>
<rect x="271" y="201" width="5" height="28" fill="#000"/>
<rect x="281" y="213" width="1" height="35" fill="#000"/>
<rect x="279" y="226" width="5" height="4" fill="#000"/>
<rect x="280" y="227" width="3" height="2" fill="#fff"/>
<rect x="289" y="215" width="1" height="42" fill="#000"/>
<rect x="287" y="225" width="5" height="11" fill="#000"/>
<rect x="297" y="217" width="1" height="17" fill="#000"/>
<rect x="295" y="219" width="5" height="11" fill="#000"/>
<rect x="296" y="220" width="3" height="9" fill="#fff"/>
<rect x="305" y="209" width="1" height="43" fill="#000"/>
<rect x="303" y="219" width="5" height="24" fill="#000"/>
<rect x="313" y="237" width="1" height="51" fill="#000"/>
<rect x="311" y="242" width="5" height="35" fill="#000"/>
<rect x="321" y="269" width="1" height="31" fill="#000"/>
<rect x="319" y="276" width="5" height="19" fill="#000"/>
<rect x="329" y="261" width="1" height="46" fill="#000"/>
<rect x="327" y="277" width="5" height="19" fill="#000"/>
<rect x="328" y="278" width="3" height="17" fill="#fff"/>
<rect x="337" y="274" width="1" height="36" fill="#000"/>
<rect x="335" y="279" width="5" height="29" fill="#000"/>
<rect x="345" y="275" width="1" height="47" fill="#000"/>
<rect x="343" y="283" width="5" height="25" fill="#000"/>
<rect x="344" y="284" width="3" height="23" fill="#fff"/>
<rect x="353" y="251" width="1" height="34" fill="#000"/>
<rect x="351" y="251" width="5" height="34" fill="#000"/>
<rect x="352" y="252" width="3" height="32" fill="#fff"/>
<rect x="361" y="251" width="1" height="23" fill="#000"/>
<rect x="359" y="251" width="5" height="7" fill="#000"/>
<rect x="369" y="249" width="1" height="43" fill="#000"/>
<rect x="367" y="257" width="5" height="27" fill="#000"/>
<rect x="377" y="278" width="1" height="21" fill="#000"/>
<rect x="375" y="282" width="5" height="8" fill="#000"/>
<rect x="376" y="283" width="3" height="6" fill="#fff"/>
<rect x="385" y="256" width="1" height="30" fill="#000"/>
<rect x="383" y="259" width="5" height="25" fill="#000"/>
<rect x="384" y="260" width="3" height="23" fill="#fff"/>
<rect x="393" y="253" width="1" height="64" fill="#000"/>
<rect x="391" y="258" width="5" height="50" fill="#000"/>
<rect x="401" y="303" width="1" height="22" fill="#000"/>
<rect x="399" y="306" width="5" height="7" fill="#000"/>
<rect x="409" y="270" width="1" height="49" fill="#000"/>
<rect x="407" y="275" width="5" height="44" fill="#000"/>
<rect x="408" y="276" width="3" height="42" fill="#fff"/>
<rect x="417" y="275" width="1" height="35" fill="#000"/>
<rect x="415" y="284" width="5" height="23" fill="#000"/>
<rect x="425" y="289" width="1" height="46" fill="#000"/>
<rect x="423" y="306" width="5" height="14" fill="#000"/>
<rect x="433" y="312" width="1" height="31" fill="#000"/>
<rect x="431" y="318" width="5" height="3" fill="#000"/>
<rect x="432" y="319" width="3" height="1" fill="#fff"/>
<rect x="441" y="290" width="1" height="47" fill="#000"/>
<rect x="439" y="318" width="5" height="10" fill="#000"/>
<rect x="449" y="313" width="1" height="33" fill="#000"/>
<rect x="447" y="326" width="5" height="8" fill="#000"/>
<rect x="457" y="331" width="1" height="44" fill="#000"/>
<rect x="455" y="334" width="5" height="3" fill="#000"/>
<rect x="465" y="304" width="1" height="37" fill="#000"/>
<rect x="463" y="306" width="5" height="31" fill="#000"/>
<rect x="464" y="307" width="3" height="29" fill="#fff"/>
<rect x="473" y="285" width="1" height="34" fill="#000"/>
<rect x="471" y="304" width="5" height="15" fill="#000"/>
<rect x="481" y="290" width="1" height="36" fill="#000"/>
<rect x="479" y="301" width="5" height="18" fill="#000"/>
<rect x="480" y="302" width="3" height="16" fill="#fff"/>
<rect x="489" y="293" width="1" height="36" fill="#000"/>
<rect x="487" y="302" width="5" height="16" fill="#000"/>
<rect x="497" y="293" width="1" height="40" fill="#000"/>
<rect x="495" y="298" width="5" height="30" fill="#000"/>
<rect x="496" y="299" width="3" height="28" fill="#fff"/>
<rect x="505" y="269" width="1" height="33" fill="#000"/>
<rect x="503" y="275" width="5" height="23" fill="#000"/>
<rect x="504" y="276" width="3" height="21" fill="#fff"/>
<rect x="513" y="269" width="1" height="23" fill="#000"/>
<rect x="511" y="275" width="5" height="13" fill="#000"/>
<rect x="521" y="236" width="1" height="56" fill="#000"/>
<rect x="519" y="244" width="5" height="42" fill="#000"/>
<rect x="520" y="245" width="3" height="40" fill="#fff"/>
<rect x="529" y="230" width="1" height="27" fill="#000"/>
<rect x="527" y="234" width="5" height="11" fill="#000"/>
<rect x="528" y="235" width="3" height="9" fill="#fff"/>
<rect x="537" y="232" width="1" height="33" fill="#000"/>
<rect x="535" y="238" width="5" height="22" fill="#000"/>
<rect x="536" y="239" width="3" height="20" fill="#fff"/>
<rect x="545" y="235" width="1" height="27" fill="#000"/>
<rect x="543" y="236" width="5" height="19" fill="#000"/>
<rect x="553" y="238" width="1" height="22" fill="#000"/>
<rect x="551" y="247" width="5" height="7" fill="#000"/>
<rect x="552" y="248" width="3" height="5" fill="#fff"/>
<rect x="561" y="209" width="1" height="47" fill="#000"/>
<rect x="559" y="220" width="5" height="28" fill="#000"/>
<rect x="560" y="221" width="3" height="26" fill="#fff"/>
<rect x="569" y="208" width="1" height="20" fill="#000"/>
<rect x="567" y="216" width="5" height="4" fill="#000"/>
<rect x="568" y="217" width="3" height="2" fill="#fff"/>
<rect x="577" y="204" width="1" height="18" fill="#000"/>
<rect x="575" y="211" width="5" height="5" fill="#000"/>
<rect x="576" y="212" width="3" height="3" fill="#fff"/>
<rect x="585" y="191" width="1" height="23" fill="#000"/>
<rect x="583" y="198" width="5" height="13" fill="#000"/>
<rect x="584" y="199" width="3" height="11" fill="#fff"/>
<rect x="593" y="198" width="1" height="32" fill="#000"/>
<rect x="591" y="198" width="5" height="19" fill="#000"/>
<rect x="601" y="209" width="1" height="31" fill="#000"/>
<rect x="599" y="215" width="5" height="19" fill="#000"/>
<rect x="609" y="224" width="1" height="13" fill="#000"/>
<rect x="607" y="228" width="5" height="5" fill="#000"/>
<rect x="608" y="229" width="3" height="3" fill="#fff"/>
<rect x="617" y="221" width="1" height="25" fill="#000"/>
<rect x="615" y="226" width="5" height="2" fill="#000"/>
<rect x="625" y="199" width="1" height="29" fill="#000"/>
<rect x="623" y="214" width="5" height="14" fill="#000"/>
<rect x="624" y="215" width="3" height="12" fill="#fff"/>
<rect x="633" y="190" width="1" height="26" fill="#000"/>
<rect x="631" y="208" width="5" height="6" fill="#000"/>
<rect x="632" y="209" width="3" height="4" fill="#fff"/>
<rect x="641" y="193" width="1" height="53" fill="#000"/>
<rect x="639" y="207" width="5" height="14" fill="#000"/>
<rect x="649" y="218" width="1" height="42" fill="#000"/>
<rect x="647" y="220" width="5" height="26" fill="#000"/>
<rect x="657" y="231" width="1" height="31" fill="#000"/>
<rect x="655" y="231" width="5" height="22" fill="#000"/>
<rect x="656" y="232" width="3" height="20" fill="#fff"/>
<rect x="665" y="185" width="1" height="50" fill="#000"/>
<rect x="663" y="194" width="5" height="38" fill="#000"/>
<rect x="664" y="195" width="3" height="36" fill="#fff"/>
<rect x="673" y="164" width="1" height="38" fill="#000"/>
<rect x="671" y="168" width="5" height="27" fill="#000"/>
<rect x="672" y="169" width="3" height="25" fill="#fff"/>
<rect x="681" y="149" width="1" height="40" fill="#000"/>
<rect x="679" y="167" width="5" height="3" fill="#000"/>
<rect x="680" y="168" width="3" height="1" fill="#fff"/>
<rect x="689" y="159" width="1" height="41" fill="#000"/>
<rect x="687" y="168" width="5" height="18" fill="#000"/>
<rect x="697" y="177" width="1" height="114" fill="#000"/>
<rect x="695" y="186" width="5" height="94" fill="#000"/>
<rect x="705" y="239" width="1" height="50" fill="#000"/>
<rect x="703" y="242" width="5" height="38" fill="#000"/>
<rect x="704" y="243" width="3" height="36" fill="#fff"/>
<rect x="713" y="240" width="1" height="58" fill="#000"/>
<rect x="711" y="242" width="5" height="46" fill="#000"/>
<rect x="721" y="267" width="1" height="35" fill="#000"/>
<rect x="719" y="285" width="5" height="4" fill="#000"/>
<rect x="720" y="286" width="3" height="2" fill="#fff"/>
<rect x="729" y="257" width="1" height="41" fill="#000"/>
<rect x="727" y="285" width="5" height="13" fill="#000"/>
<rect x="737" y="282" width="1" height="36" fill="#000"/>
<rect x="735" y="296" width="5" height="3" fill="#000"/>
<rect x="745" y="297" width="1" height="28" fill="#000"/>
<rect x="743" y="297" width="5" height="8" fill="#000"/>
<rect x="753" y="288" width="1" height="32" fill="#000"/>
<rect x="751" y="296" width="5" height="11" fill="#000"/>
<rect x="752" y="297" width="3" height="9" fill="#fff"/>
<rect x="761" y="266" width="1" height="36" fill="#000"/>
<rect x="759" y="289" width="5" height="13" fill="#000"/>
<rect x="760" y="290" width="3" height="11" fill="#fff"/>
<rect x="769" y="268" width="1" height="37" fill="#000"/>
<rect x="767" y="290" width="5" height="6" fill="#000"/>
<rect x="777" y="258" width="1" height="42" fill="#000"/>
<rect x="775" y="261" width="5" height="34" fill="#000"/>
<rect x="776" y="262" width="3" height="32" fill="#fff"/>
<rect x="785" y="245" width="1" height="28" fill="#000"/>
<rect x="783" y="251" width="5" height="11" fill="#000"/>
<rect x="784" y="252" width="3" height="9" fill="#fff"/>
<rect x="793" y="246" width="1" height="57" fill="#000"/>
<rect x="791" y="252" width="5" height="45" fill="#000"/>
<rect x="801" y="293" width="1" height="31" fill="#000"/>
<rect x="799" y="296" width="5" height="15" fill="#000"/>
<rect x="809" y="274" width="1" height="40" fill="#000"/>
<rect x="807" y="277" width="5" height="35" fill="#000"/>
<rect x="808" y="278" width="3" height="33" fill="#fff"/>
<rect x="817" y="279" width="1" height="45" fill="#000"/>
<rect x="815" y="282" width="5" height="27" fill="#000"/>
<rect x="825" y="307" width="1" height="50" fill="#000"/>
<rect x="823" y="307" width="5" height="36" fill="#000"/>
<rect x="833" y="330" width="1" height="27" fill="#000"/>
<rect x="831" y="341" width="5" height="8" fill="#000"/>
<rect x="841" y="306" width="1" height="102" fill="#000"/>
<rect x="839" y="348" width="5" height="39" fill="#000"/>
<rect x="849" y="383" width="1" height="67" fill="#000"/>
<rect x="847" y="386" width="5" height="35" fill="#000"/>
<rect x="857" y="423" width="1" height="37" fill="#000"/>
<rect x="855" y="429" width="5" height="25" fill="#000"/>
<rect x="865" y="428" width="1" height="62" fill="#000"/>
<rect x="863" y="453" width="5" height="32" fill="#000"/>
<rect x="873" y="469" width="1" height="34" fill="#000"/>
<rect x="871" y="480" width="5" height="6" fill="#000"/>
<rect x="872" y="481" width="3" height="4" fill="#fff"/>
<rect x="881" y="473" width="1" height="57" fill="#000"/>
<rect x="879" y="480" width="5" height="44" fill="#000"/>
<rect x="889" y="513" width="1" height="58" fill="#000"/>
<rect x="887" y="524" width="5" height="38" fill="#000"/>
<rect x="897" y="514" width="1" height="44" fill="#000"/>
<rect x="895" y="523" width="5" height="27" fill="#000"/>
<rect x="896" y="524" width="3" height="25" fill="#fff"/>
<rect x="905" y="507" width="1" height="45" fill="#000"/>
<rect x="903" y="519" width="5" height="8" fill="#000"/>
<rect x="913" y="514" width="1" height="81" fill="#000"/>
<rect x="911" y="527" width="5" height="50" fill="#000"/>
<rect x="921" y="538" width="1" height="90" fill="#000"/>
<rect x="919" y="552" width="5" height="24" fill="#000"/>
<rect x="920" y="553" width="3" height="22" fill="#fff"/>
<rect x="929" y="550" width="1" height="59" fill="#000"/>
<rect x="927" y="551" width="5" height="52" fill="#000"/>
<rect x="937" y="592" width="1" height="26" fill="#000"/>
<rect x="935" y="604" width="5" height="5" fill="#000"/>
<rect x="945" y="578" width="1" height="49" fill="#000"/>
<rect x="943" y="607" width="5" height="11" fill="#000"/>
<rect x="953" y="590" width="1" height="69" fill="#000"/>
<rect x="951" y="608" width="5" height="9" fill="#000"/>
<rect x="952" y="609" width="3" height="7" fill="#fff"/>
<rect x="961" y="577" width="1" height="56" fill="#000"/>
<rect x="959" y="594" width="5" height="14" fill="#000"/>
<rect x="960" y="595" width="3" height="12" fill="#fff"/>
<rect x="969" y="583" width="1" height="67" fill="#000"/>
<rect x="967" y="594" width="5" height="44" fill="#000"/>
</g>
<polyline points="9.5,147.5 81.5,264.6 161.5,141.3 457.5,375.0 585.5,190.6 657.5,262.0 681.5,149.8 953.5,659.5" stroke="#ff0000" stroke-width="2" fill="none" stroke-linejoin="round" shape-rendering="crispEdges"/>
<g fill="#dc143c" shape-rendering="crispEdges">
<rect x="14" y="141" width="1" height="1"/><rect x="3" y="141" width="1" height="1"/><rect x="13" y="140" width="1" height="1"/><rect x="12" y="140" width="1" height="1"/><rect x="5" y="140" width="1" height="1"/><rect x="4" y="140" width="1" height="1"/><rect x="13" y="139" width="1" height="1"/><rect x="11" y="139" width="1" height="1"/><rect x="6" y="139" width="1" height="1"/><rect x="5" y="139" width="1" height="1"/><rect x="4" y="139" width="1" height="1"/><rect x="12" y="138" width="1" height="1"/><rect x="10" y="138" width="1" height="1"/><rect x="9" y="138" width="1" height="1"/><rect x="8" y="138" width="1" height="1"/><rect x="7" y="138" width="1" height="1"/><rect x="6" y="138" width="1" height="1"/><rect x="11" y="137" width="1" height="1"/><rect x="8" y="137" width="1" height="1"/><rect x="7" y="137" width="1" height="1"/><rect x="6" y="137" width="1" height="1"/><rect x="11" y="136" width="1" height="1"/><rect x="8" y="136" width="1" height="1"/><rect x="7" y="136" width="1" height="1"/><rect x="6" y="136" width="1" height="1"/><rect x="10" y="135" width="1" height="1"/><rect x="8" y="135" width="1" height="1"/><rect x="7" y="135" width="1" height="1"/><rect x="10" y="134" width="1" height="1"/><rect x="8" y="134" width="1" height="1"/><rect x="7" y="134" width="1" height="1"/><rect x="9" y="133" width="1" height="1"/><rect x="8" y="133" width="1" height="1"/>
<rect x="126" y="170" width="1" height="1"/><rect x="115" y="170" width="1" height="1"/><rect x="125" y="169" width="1" height="1"/><rect x="124" y="169" width="1" height="1"/><rect x="117" y="169" width="1" height="1"/><rect x="116" y="169" width="1" height="1"/><rect x="125" y="168" width="1" height="1"/><rect x="123" y="168" width="1" height="1"/><rect x="118" y="168" width="1" height="1"/><rect x="117" y="168" width="1" height="1"/><rect x="116" y="168" width="1" height="1"/><rect x="124" y="167" width="1" height="1"/><rect x="122" y="167" width="1" height="1"/><rect x="121" y="167" width="1" height="1"/><rect x="120" y="167" width="1" height="1"/><rect x="119" y="167" width="1" height="1"/><rect x="118" y="167" width="1" height="1"/><rect x="123" y="166" width="1" height="1"/><rect x="120" y="166" width="1" height="1"/><rect x="119" y="166" width="1" height="1"/><rect x="118" y="166" width="1" height="1"/><rect x="123" y="165" width="1" height="1"/><rect x="120" y="165" width="1" height="1"/><rect x="119" y="165" width="1" height="1"/><rect x="118" y="165" width="1" height="1"/><rect x="122" y="164" width="1" height="1"/><rect x="120" y="164" width="1" height="1"/><rect x="119" y="164" width="1" height="1"/><rect x="122" y="163" width="1" height="1"/><rect x="120" y="163" width="1" height="1"/><rect x="119" y="163" width="1" height="1"/><rect x="121" y="162" width="1" height="1"/><rect x="120" y="162" width="1" height="1"/>
<rect x="166" y="135" width="1" height="1"/><rect x="155" y="135" width="1" height="1"/><rect x="165" y="134" width="1" height="1"/><rect x="164" y="134" width="1" height="1"/><rect x="157" y="134" width="1" height="1"/><rect x="156" y="134" width="1" height="1"/><rect x="165" y="133" width="1" height="1"/><rect x="163" y="133" width="1" height="1"/><rect x="158" y="133" width="1" height="1"/><rect x="157" y="133" width="1" height="1"/><rect x="156" y="133" width="1" height="1"/><rect x="164" y="132" width="1" height="1"/><rect x="162" y="132" width="1" height="1"/><rect x="161" y="132" width="1" height="1"/><rect x="160" y="132" width="1" height="1"/><rect x="159" y="132" width="1" height="1"/><rect x="158" y="132" width="1" height="1"/><rect x="163" y="131" width="1" height="1"/><rect x="160" y="131" width="1" height="1"/><rect x="159" y="131" width="1" height="1"/><rect x="158" y="131" width="1" height="1"/><rect x="163" y="130" width="1" height="1"/><rect x="160" y="130" width="1" height="1"/><rect x="159" y="130" width="1" height="1"/><rect x="158" y="130" width="1" height="1"/><rect x="162" y="129" width="1" height="1"/><rect x="160" y="129" width="1" height="1"/><rect x="159" y="129" width="1" height="1"/><rect x="162" y="128" width="1" height="1"/><rect x="160" y="128" width="1" height="1"/><rect x="159" y="128" width="1" height="1"/><rect x="161" y="127" width="1" height="1"/><rect x="160" y="127" width="1" height="1"/>
<rect x="198" y="144" width="1" height="1"/><rect x="187" y="144" width="1" height="1"/><rect x="197" y="143" width="1" height="1"/><rect x="196" y="143" width="1" height="1"/><rect x="189" y="143" width="1" height="1"/><rect x="188" y="143" width="1" height="1"/><rect x="197" y="142" width="1" height="1"/><rect x="195" y="142" width="1" height="1"/><rect x="190" y="142" width="1" height="1"/><rect x="189" y="142" width="1" height="1"/><rect x="188" y="142" width="1" height="1"/><rect x="196" y="141" width="1" height="1"/><rect x="194" y="141" width="1" height="1"/><rect x="193" y="141" width="1" height="1"/><rect x="192" y="141" width="1" height="1"/><rect x="191" y="141" width="1" height="1"/><rect x="190" y="141" width="1" height="1"/><rect x="195" y="140" width="1" height="1"/><rect x="192" y="140" width="1" height="1"/><rect x="191" y="140" width="1" height="1"/><rect x="190" y="140" width="1" height="1"/><rect x="195" y="139" width="1" height="1"/><rect x="192" y="139" width="1" height="1"/><rect x="191" y="139" width="1" height="1"/><rect x="190" y="139" width="1" height="1"/><rect x="194" y="138" width="1" height="1"/><rect x="192" y="138" width="1" height="1"/><rect x="191" y="138" width="1" height="1"/><rect x="194" y="137" width="1" height="1"/><rect x="192" y="137" width="1" height="1"/><rect x="191" y="137" width="1" height="1"/><rect x="193" y="136" width="1" height="1"/><rect x="192" y="136" width="1" height="1"/>
<rect x="230" y="145" width="1" height="1"/><rect x="219" y="145" width="1" height="1"/><rect x="229" y="144" width="1" height="1"/><rect x="228" y="144" width="1" height="1"/><rect x="221" y="144" width="1" height="1"/><rect x="220" y="144" width="1" height="1"/><rect x="229" y="143" width="1" height="1"/><rect x="227" y="143" width="1" height="1"/><rect x="222" y="143" width="1" height="1"/><rect x="221" y="143" width="1" height="1"/><rect x="220" y="143" width="1" height="1"/><rect x="228" y="142" width="1" height="1"/><rect x="226" y="142" width="1" height="1"/><rect x="225" y="142" width="1" height="1"/><rect x="224" y="142" width="1" height="1"/><rect x="223" y="142" width="1" height="1"/><rect x="222" y="142" width="1" height="1"/><rect x="227" y="141" width="1" height="1"/><rect x="224" y="141" width="1" height="1"/><rect x="223" y="141" width="1" height="1"/><rect x="222" y="141" width="1" height="1"/><rect x="227" y="140" width="1" height="1"/><rect x="224" y="140" width="1" height="1"/><rect x="223" y="140" width="1" height="1"/><rect x="222" y="140" width="1" height="1"/><rect x="226" y="139" width="1" height="1"/><rect x="224" y="139" width="1" height="1"/><rect x="223" y="139" width="1" height="1"/><rect x="226" y="138" width="1" height="1"/><rect x="224" y="138" width="1" height="1"/><rect x="223" y="138" width="1" height="1"/><rect x="225" y="137" width="1" height="1"/><rect x="224" y="137" width="1" height="1"/>
<rect x="270" y="194" width="1" height="1"/><rect x="259" y="194" width="1" height="1"/><rect x="269" y="193" width="1" height="1"/><rect x="268" y="193" width="1" height="1"/><rect x="261" y="193" width="1" height="1"/><rect x="260" y="193" width="1" height="1"/><rect x="269" y="192" width="1" height="1"/><rect x="267" y="192" width="1" height="1"/><rect x="262" y="192" width="1" height="1"/><rect x="261" y="192" width="1" height="1"/><rect x="260" y="192" width="1" height="1"/><rect x="268" y="191" width="1" height="1"/><rect x="266" y="191" width="1" height="1"/><rect x="265" y="191" width="1" height="1"/><rect x="264" y="191" width="1" height="1"/><rect x="263" y="191" width="1" height="1"/><rect x="262" y="191" width="1" height="1"/><rect x="267" y="190" width="1" height="1"/><rect x="264" y="190" width="1" height="1"/><rect x="263" y="190" width="1" height="1"/><rect x="262" y="190" width="1" height="1"/><rect x="267" y="189" width="1" height="1"/><rect x="264" y="189" width="1" height="1"/><rect x="263" y="189" width="1" height="1"/><rect x="262" y="189" width="1" height="1"/><rect x="266" y="188" width="1" height="1"/><rect x="264" y="188" width="1" height="1"/><rect x="263" y="188" width="1" height="1"/><rect x="266" y="187" width="1" height="1"/><rect x="264" y="187" width="1" height="1"/><rect x="263" y="187" width="1" height="1"/><rect x="265" y="186" width="1" height="1"/><rect x="264" y="186" width="1" height="1"/>
<rect x="310" y="203" width="1" height="1"/><rect x="299" y="203" width="1" height="1"/><rect x="309" y="202" width="1" height="1"/><rect x="308" y="202" width="1" height="1"/><rect x="301" y="202" width="1" height="1"/><rect x="300" y="202" width="1" height="1"/><rect x="309" y="201" width="1" height="1"/><rect x="307" y="201" width="1" height="1"/><rect x="302" y="201" width="1" height="1"/><rect x="301" y="201" width="1" height="1"/><rect x="300" y="201" width="1" height="1"/><rect x="308" y="200" width="1" height="1"/><rect x="306" y="200" width="1" height="1"/><rect x="305" y="200" width="1" height="1"/><rect x="304" y="200" width="1" height="1"/><rect x="303" y="200" width="1" height="1"/><rect x="302" y="200" width="1" height="1"/><rect x="307" y="199" width="1" height="1"/><rect x="304" y="199" width="1" height="1"/><rect x="303" y="199" width="1" height="1"/><rect x="302" y="199" width="1" height="1"/><rect x="307" y="198" width="1" height="1"/><rect x="304" y="198" width="1" height="1"/><rect x="303" y="198" width="1" height="1"/><rect x="302" y="198" width="1" height="1"/><rect x="306" y="197" width="1" height="1"/><rect x="304" y="197" width="1" height="1"/><rect x="303" y="197" width="1" height="1"/><rect x="306" y="196" width="1" height="1"/><rect x="304" y="196" width="1" height="1"/><rect x="303" y="196" width="1" height="1"/><rect x="305" y="195" width="1" height="1"/><rect x="304" y="195" width="1" height="1"/>
<rect x="374" y="243" width="1" height="1"/><rect x="363" y="243" width="1" height="1"/><rect x="373" y="242" width="1" height="1"/><rect x="372" y="242" width="1" height="1"/><rect x="365" y="242" width="1" height="1"/><rect x="364" y="242" width="1" height="1"/><rect x="373" y="241" width="1" height="1"/><rect x="371" y="241" width="1" height="1"/><rect x="366" y="241" width="1" height="1"/><rect x="365" y="241" width="1" height="1"/><rect x="364" y="241" width="1" height="1"/><rect x="372" y="240" width="1" height="1"/><rect x="370" y="240" width="1" height="1"/><rect x="369" y="240" width="1" height="1"/><rect x="368" y="240" width="1" height="1"/><rect x="367" y="240" width="1" height="1"/><rect x="366" y="240" width="1" height="1"/><rect x="371" y="239" width="1" height="1"/><rect x="368" y="239" width="1" height="1"/><rect x="367" y="239" width="1" height="1"/><rect x="366" y="239" width="1" height="1"/><rect x="371" y="238" width="1" height="1"/><rect x="368" y="238" width="1" height="1"/><rect x="367" y="238" width="1" height="1"/><rect x="366" y="238" width="1" height="1"/><rect x="370" y="237" width="1" height="1"/><rect x="368" y="237" width="1" height="1"/><rect x="367" y="237" width="1" height="1"/><rect x="370" y="236" width="1" height="1"/><rect x="368" y="236" width="1" height="1"/><rect x="367" y="236" width="1" height="1"/><rect x="369" y="235" width="1" height="1"/><rect x="368" y="235" width="1" height="1"/>
<rect x="478" y="279" width="1" height="1"/><rect x="467" y="279" width="1" height="1"/><rect x="477" y="278" width="1" height="1"/><rect x="476" y="278" width="1" height="1"/><rect x="469" y="278" width="1" height="1"/><rect x="468" y="278" width="1" height="1"/><rect x="477" y="277" width="1" height="1"/><rect x="475" y="277" width="1" height="1"/><rect x="470" y="277" width="1" height="1"/><rect x="469" y="277" width="1" height="1"/><rect x="468" y="277" width="1" height="1"/><rect x="476" y="276" width="1" height="1"/><rect x="474" y="276" width="1" height="1"/><rect x="473" y="276" width="1" height="1"/><rect x="472" y="276" width="1" height="1"/><rect x="471" y="276" width="1" height="1"/><rect x="470" y="276" width="1" height="1"/><rect x="475" y="275" width="1" height="1"/><rect x="472" y="275" width="1" height="1"/><rect x="471" y="275" width="1" height="1"/><rect x="470" y="275" width="1" height="1"/><rect x="475" y="274" width="1" height="1"/><rect x="472" y="274" width="1" height="1"/><rect x="471" y="274" width="1" height="1"/><rect x="470" y="274" width="1" height="1"/><rect x="474" y="273" width="1" height="1"/><rect x="472" y="273" width="1" height="1"/><rect x="471" y="273" width="1" height="1"/><rect x="474" y="272" width="1" height="1"/><rect x="472" y="272" width="1" height="1"/><rect x="471" y="272" width="1" height="1"/><rect x="473" y="271" width="1" height="1"/><rect x="472" y="271" width="1" height="1"/>
<rect x="534" y="224" width="1" height="1"/><rect x="523" y="224" width="1" height="1"/><rect x="533" y="223" width="1" height="1"/><rect x="532" y="223" width="1" height="1"/><rect x="525" y="223" width="1" height="1"/><rect x="524" y="223" width="1" height="1"/><rect x="533" y="222" width="1" height="1"/><rect x="531" y="222" width="1" height="1"/><rect x="526" y="222" width="1" height="1"/><rect x="525" y="222" width="1" height="1"/><rect x="524" y="222" width="1" height="1"/><rect x="532" y="221" width="1" height="1"/><rect x="530" y="221" width="1" height="1"/><rect x="529" y="221" width="1" height="1"/><rect x="528" y="221" width="1" height="1"/><rect x="527" y="221" width="1" height="1"/><rect x="526" y="221" width="1" height="1"/><rect x="531" y="220" width="1" height="1"/><rect x="528" y="220" width="1" height="1"/><rect x="527" y="220" width="1" height="1"/><rect x="526" y="220" width="1" height="1"/><rect x="531" y="219" width="1" height="1"/><rect x="528" y="219" width="1" height="1"/><rect x="527" y="219" width="1" height="1"/><rect x="526" y="219" width="1" height="1"/><rect x="530" y="218" width="1" height="1"/><rect x="528" y="218" width="1" height="1"/><rect x="527" y="218" width="1" height="1"/><rect x="530" y="217" width="1" height="1"/><rect x="528" y="217" width="1" height="1"/><rect x="527" y="217" width="1" height="1"/><rect x="529" y="216" width="1" height="1"/><rect x="528" y="216" width="1" height="1"/>
<rect x="590" y="184" width="1" height="1"/><rect x="579" y="184" width="1" height="1"/><rect x="589" y="183" width="1" height="1"/><rect x="588" y="183" width="1" height="1"/><rect x="581" y="183" width="1" height="1"/><rect x="580" y="183" width="1" height="1"/><rect x="589" y="182" width="1" height="1"/><rect x="587" y="182" width="1" height="1"/><rect x="582" y="182" width="1" height="1"/><rect x="581" y="182" width="1" height="1"/><rect x="580" y="182" width="1" height="1"/><rect x="588" y="181" width="1" height="1"/><rect x="586" y="181" width="1" height="1"/><rect x="585" y="181" width="1" height="1"/><rect x="584" y="181" width="1" height="1"/><rect x="583" y="181" width="1" height="1"/><rect x="582" y="181" width="1" height="1"/><rect x="587" y="180" width="1" height="1"/><rect x="584" y="180" width="1" height="1"/><rect x="583" y="180" width="1" height="1"/><rect x="582" y="180" width="1" height="1"/><rect x="587" y="179" width="1" height="1"/><rect x="584" y="179" width="1" height="1"/><rect x="583" y="179" width="1" height="1"/><rect x="582" y="179" width="1" height="1"/><rect x="586" y="178" width="1" height="1"/><rect x="584" y="178" width="1" height="1"/><rect x="583" y="178" width="1" height="1"/><rect x="586" y="177" width="1" height="1"/><rect x="584" y="177" width="1" height="1"/><rect x="583" y="177" width="1" height="1"/><rect x="585" y="176" width="1" height="1"/><rect x="584" y="176" width="1" height="1"/>
<rect x="638" y="184" width="1" height="1"/><rect x="627" y="184" width="1" height="1"/><rect x="637" y="183" width="1" height="1"/><rect x="636" y="183" width="1" height="1"/><rect x="629" y="183" width="1" height="1"/><rect x="628" y="183" width="1" height="1"/><rect x="637" y="182" width="1" height="1"/><rect x="635" y="182" width="1" height="1"/><rect x="630" y="182" width="1" height="1"/><rect x="629" y="182" width="1" height="1"/><rect x="628" y="182" width="1" height="1"/><rect x="636" y="181" width="1" height="1"/><rect x="634" y="181" width="1" height="1"/><rect x="633" y="181" width="1" height="1"/><rect x="632" y="181" width="1" height="1"/><rect x="631" y="181" width="1" height="1"/><rect x="630" y="181" width="1" height="1"/><rect x="635" y="180" width="1" height="1"/><rect x="632" y="180" width="1" height="1"/><rect x="631" y="180" width="1" height="1"/><rect x="630" y="180" width="1" height="1"/><rect x="635" y="179" width="1" height="1"/><rect x="632" y="179" width="1" height="1"/><rect x="631" y="179" width="1" height="1"/><rect x="630" y="179" width="1" height="1"/><rect x="634" y="178" width="1" height="1"/><rect x="632" y="178" width="1" height="1"/><rect x="631" y="178" width="1" height="1"/><rect x="634" y="177" width="1" height="1"/><rect x="632" y="177" width="1" height="1"/><rect x="631" y="177" width="1" height="1"/><rect x="633" y="176" width="1" height="1"/><rect x="632" y="176" width="1" height="1"/>
<rect x="686" y="142" width="1" height="1"/><rect x="675" y="142" width="1" height="1"/><rect x="685" y="141" width="1" height="1"/><rect x="684" y="141" width="1" height="1"/><rect x="677" y="141" width="1" height="1"/><rect x="676" y="141" width="1" height="1"/><rect x="685" y="140" width="1" height="1"/><rect x="683" y="140" width="1" height="1"/><rect x="678" y="140" width="1" height="1"/><rect x="677" y="140" width="1" height="1"/><rect x="676" y="140" width="1" height="1"/><rect x="684" y="139" width="1" height="1"/><rect x="682" y="139" width="1" height="1"/><rect x="681" y="139" width="1" height="1"/><rect x="680" y="139" width="1" height="1"/><rect x="679" y="139" width="1" height="1"/><rect x="678" y="139" width="1" height="1"/><rect x="683" y="138" width="1" height="1"/><rect x="680" y="138" width="1" height="1"/><rect x="679" y="138" width="1" height="1"/><rect x="678" y="138" width="1" height="1"/><rect x="683" y="137" width="1" height="1"/><rect x="680" y="137" width="1" height="1"/><rect x="679" y="137" width="1" height="1"/><rect x="678" y="137" width="1" height="1"/><rect x="682" y="136" width="1" height="1"/><rect x="680" y="136" width="1" height="1"/><rect x="679" y="136" width="1" height="1"/><rect x="682" y="135" width="1" height="1"/><rect x="680" y="135" width="1" height="1"/><rect x="679" y="135" width="1" height="1"/><rect x="681" y="134" width="1" height="1"/><rect x="680" y="134" width="1" height="1"/>
<rect x="790" y="239" width="1" height="1"/><rect x="779" y="239" width="1" height="1"/><rect x="789" y="238" width="1" height="1"/><rect x="788" y="238" width="1" height="1"/><rect x="781" y="238" width="1" height="1"/><rect x="780" y="238" width="1" height="1"/><rect x="789" y="237" width="1" height="1"/><rect x="787" y="237" width="1" height="1"/><rect x="782" y="237" width="1" height="1"/><rect x="781" y="237" width="1" height="1"/><rect x="780" y="237" width="1" height="1"/><rect x="788" y="236" width="1" height="1"/><rect x="786" y="236" width="1" height="1"/><rect x="785" y="236" width="1" height="1"/><rect x="784" y="236" width="1" height="1"/><rect x="783" y="236" width="1" height="1"/><rect x="782" y="236" width="1" height="1"/><rect x="787" y="235" width="1" height="1"/><rect x="784" y="235" width="1" height="1"/><rect x="783" y="235" width="1" height="1"/><rect x="782" y="235" width="1" height="1"/><rect x="787" y="234" width="1" height="1"/><rect x="784" y="234" width="1" height="1"/><rect x="783" y="234" width="1" height="1"/><rect x="782" y="234" width="1" height="1"/><rect x="786" y="233" width="1" height="1"/><rect x="784" y="233" width="1" height="1"/><rect x="783" y="233" width="1" height="1"/><rect x="786" y="232" width="1" height="1"/><rect x="784" y="232" width="1" height="1"/><rect x="783" y="232" width="1" height="1"/><rect x="785" y="231" width="1" height="1"/><rect x="784" y="231" width="1" height="1"/>
<rect x="846" y="300" width="1" height="1"/><rect x="835" y="300" width="1" height="1"/><rect x="845" y="299" width="1" height="1"/><rect x="844" y="299" width="1" height="1"/><rect x="837" y="299" width="1" height="1"/><rect x="836" y="299" width="1" height="1"/><rect x="845" y="298" width="1" height="1"/><rect x="843" y="298" width="1" height="1"/><rect x="838" y="298" width="1" height="1"/><rect x="837" y="298" width="1" height="1"/><rect x="836" y="298" width="1" height="1"/><rect x="844" y="297" width="1" height="1"/><rect x="842" y="297" width="1" height="1"/><rect x="841" y="297" width="1" height="1"/><rect x="840" y="297" width="1" height="1"/><rect x="839" y="297" width="1" height="1"/><rect x="838" y="297" width="1" height="1"/><rect x="843" y="296" width="1" height="1"/><rect x="840" y="296" width="1" height="1"/><rect x="839" y="296" width="1" height="1"/><rect x="838" y="296" width="1" height="1"/><rect x="843" y="295" width="1" height="1"/><rect x="840" y="295" width="1" height="1"/><rect x="839" y="295" width="1" height="1"/><rect x="838" y="295" width="1" height="1"/><rect x="842" y="294" width="1" height="1"/><rect x="840" y="294" width="1" height="1"/><rect x="839" y="294" width="1" height="1"/><rect x="842" y="293" width="1" height="1"/><rect x="840" y="293" width="1" height="1"/><rect x="839" y="293" width="1" height="1"/><rect x="841" y="292" width="1" height="1"/><rect x="840" y="292" width="1" height="1"/>
<rect x="910" y="501" width="1" height="1"/><rect x="899" y="501" width="1" height="1"/><rect x="909" y="500" width="1" height="1"/><rect x="908" y="500" width="1" height="1"/><rect x="901" y="500" width="1" height="1"/><rect x="900" y="500" width="1" height="1"/><rect x="909" y="499" width="1" height="1"/><rect x="907" y="499" width="1" height="1"/><rect x="902" y="499" width="1" height="1"/><rect x="901" y="499" width="1" height="1"/><rect x="900" y="499" width="1" height="1"/><rect x="908" y="498" width="1" height="1"/><rect x="906" y="498" width="1" height="1"/><rect x="905" y="498" width="1" height="1"/><rect x="904" y="498" width="1" height="1"/><rect x="903" y="498" width="1" height="1"/><rect x="902" y="498" width="1" height="1"/><rect x="907" y="497" width="1" height="1"/><rect x="904" y="497" width="1" height="1"/><rect x="903" y="497" width="1" height="1"/><rect x="902" y="497" width="1" height="1"/><rect x="907" y="496" width="1" height="1"/><rect x="904" y="496" width="1" height="1"/><rect x="903" y="496" width="1" height="1"/><rect x="902" y="496" width="1" height="1"/><rect x="906" y="495" width="1" height="1"/><rect x="904" y="495" width="1" height="1"/><rect x="903" y="495" width="1" height="1"/><rect x="906" y="494" width="1" height="1"/><rect x="904" y="494" width="1" height="1"/><rect x="903" y="494" width="1" height="1"/><rect x="905" y="493" width="1" height="1"/><rect x="904" y="493" width="1" height="1"/>
<rect x="75" y="268" width="1" height="1"/><rect x="86" y="268" width="1" height="1"/><rect x="76" y="269" width="1" height="1"/><rect x="77" y="269" width="1" height="1"/><rect x="84" y="269" width="1" height="1"/><rect x="85" y="269" width="1" height="1"/><rect x="76" y="270" width="1" height="1"/><rect x="78" y="270" width="1" height="1"/><rect x="83" y="270" width="1" height="1"/><rect x="84" y="270" width="1" height="1"/><rect x="85" y="270" width="1" height="1"/><rect x="77" y="271" width="1" height="1"/><rect x="79" y="271" width="1" height="1"/><rect x="80" y="271" width="1" height="1"/><rect x="81" y="271" width="1" height="1"/><rect x="82" y="271" width="1" height="1"/><rect x="83" y="271" width="1" height="1"/><rect x="78" y="272" width="1" height="1"/><rect x="81" y="272" width="1" height="1"/><rect x="82" y="272" width="1" height="1"/><rect x="83" y="272" width="1" height="1"/><rect x="78" y="273" width="1" height="1"/><rect x="81" y="273" width="1" height="1"/><rect x="82" y="273" width="1" height="1"/><rect x="83" y="273" width="1" height="1"/><rect x="79" y="274" width="1" height="1"/><rect x="81" y="274" width="1" height="1"/><rect x="82" y="274" width="1" height="1"/><rect x="79" y="275" width="1" height="1"/><rect x="81" y="275" width="1" height="1"/><rect x="82" y="275" width="1" height="1"/><rect x="80" y="276" width="1" height="1"/><rect x="81" y="276" width="1" height="1"/>
<rect x="123" y="244" width="1" height="1"/><rect x="134" y="244" width="1" height="1"/><rect x="124" y="245" width="1" height="1"/><rect x="125" y="245" width="1" height="1"/><rect x="132" y="245" width="1" height="1"/><rect x="133" y="245" width="1" height="1"/><rect x="124" y="246" width="1" height="1"/><rect x="126" y="246" width="1" height="1"/><rect x="131" y="246" width="1" height="1"/><rect x="132" y="246" width="1" height="1"/><rect x="133" y="246" width="1" height="1"/><rect x="125" y="247" width="1" height="1"/><rect x="127" y="247" width="1" height="1"/><rect x="128" y="247" width="1" height="1"/><rect x="129" y="247" width="1" height="1"/><rect x="130" y="247" width="1" height="1"/><rect x="131" y="247" width="1" height="1"/><rect x="126" y="248" width="1" height="1"/><rect x="129" y="248" width="1" height="1"/><rect x="130" y="248" width="1" height="1"/><rect x="131" y="248" width="1" height="1"/><rect x="126" y="249" width="1" height="1"/><rect x="129" y="249" width="1" height="1"/><rect x="130" y="249" width="1" height="1"/><rect x="131" y="249" width="1" height="1"/><rect x="127" y="250" width="1" height="1"/><rect x="129" y="250" width="1" height="1"/><rect x="130" y="250" width="1" height="1"/><rect x="127" y="251" width="1" height="1"/><rect x="129" y="251" width="1" height="1"/><rect x="130" y="251" width="1" height="1"/><rect x="128" y="252" width="1" height="1"/><rect x="129" y="252" width="1" height="1"/>
<rect x="203" y="200" width="1" height="1"/><rect x="214" y="200" width="1" height="1"/><rect x="204" y="201" width="1" height="1"/><rect x="205" y="201" width="1" height="1"/><rect x="212" y="201" width="1" height="1"/><rect x="213" y="201" width="1" height="1"/><rect x="204" y="202" width="1" height="1"/><rect x="206" y="202" width="1" height="1"/><rect x="211" y="202" width="1" height="1"/><rect x="212" y="202" width="1" height="1"/><rect x="213" y="202" width="1" height="1"/><rect x="205" y="203" width="1" height="1"/><rect x="207" y="203" width="1" height="1"/><rect x="208" y="203" width="1" height="1"/><rect x="209" y="203" width="1" height="1"/><rect x="210" y="203" width="1" height="1"/><rect x="211" y="203" width="1" height="1"/><rect x="206" y="204" width="1" height="1"/><rect x="209" y="204" width="1" height="1"/><rect x="210" y="204" width="1" height="1"/><rect x="211" y="204" width="1" height="1"/><rect x="206" y="205" width="1" height="1"/><rect x="209" y="205" width="1" height="1"/><rect x="210" y="205" width="1" height="1"/><rect x="211" y="205" width="1" height="1"/><rect x="207" y="206" width="1" height="1"/><rect x="209" y="206" width="1" height="1"/><rect x="210" y="206" width="1" height="1"/><rect x="207" y="207" width="1" height="1"/><rect x="209" y="207" width="1" height="1"/><rect x="210" y="207" width="1" height="1"/><rect x="208" y="208" width="1" height="1"/><rect x="209" y="208" width="1" height="1"/>
<rect x="251" y="249" width="1" height="1"/><rect x="262" y="249" width="1" height="1"/><rect x="252" y="250" width="1" height="1"/><rect x="253" y="250" width="1" height="1"/><rect x="260" y="250" width="1" height="1"/><rect x="261" y="250" width="1" height="1"/><rect x="252" y="251" width="1" height="1"/><rect x="254" y="251" width="1" height="1"/><rect x="259" y="251" width="1" height="1"/><rect x="260" y="251" width="1" height="1"/><rect x="261" y="251" width="1" height="1"/><rect x="253" y="252" width="1" height="1"/><rect x="255" y="252" width="1" height="1"/><rect x="256" y="252" width="1" height="1"/><rect x="257" y="252" width="1" height="1"/><rect x="258" y="252" width="1" height="1"/><rect x="259" y="252" width="1" height="1"/><rect x="254" y="253" width="1" height="1"/><rect x="257" y="253" width="1" height="1"/><rect x="258" y="253" width="1" height="1"/><rect x="259" y="253" width="1" height="1"/><rect x="254" y="254" width="1" height="1"/><rect x="257" y="254" width="1" height="1"/><rect x="258" y="254" width="1" height="1"/><rect x="259" y="254" width="1" height="1"/><rect x="255" y="255" width="1" height="1"/><rect x="257" y="255" width="1" height="1"/><rect x="258" y="255" width="1" height="1"/><rect x="255" y="256" width="1" height="1"/><rect x="257" y="256" width="1" height="1"/><rect x="258" y="256" width="1" height="1"/><rect x="256" y="257" width="1" height="1"/><rect x="257" y="257" width="1" height="1"/>
<rect x="283" y="260" width="1" height="1"/><rect x="294" y="260" width="1" height="1"/><rect x="284" y="261" width="1" height="1"/><rect x="285" y="261" width="1" height="1"/><rect x="292" y="261" width="1" height="1"/><rect x="293" y="261" width="1" height="1"/><rect x="284" y="262" width="1" height="1"/><rect x="286" y="262" width="1" height="1"/><rect x="291" y="262" width="1" height="1"/><rect x="292" y="262" width="1" height="1"/><rect x="293" y="262" width="1" height="1"/><rect x="285" y="263" width="1" height="1"/><rect x="287" y="263" width="1" height="1"/><rect x="288" y="263" width="1" height="1"/><rect x="289" y="263" width="1" height="1"/><rect x="290" y="263" width="1" height="1"/><rect x="291" y="263" width="1" height="1"/><rect x="286" y="264" width="1" height="1"/><rect x="289" y="264" width="1" height="1"/><rect x="290" y="264" width="1" height="1"/><rect x="291" y="264" width="1" height="1"/><rect x="286" y="265" width="1" height="1"/><rect x="289" y="265" width="1" height="1"/><rect x="290" y="265" width="1" height="1"/><rect x="291" y="265" width="1" height="1"/><rect x="287" y="266" width="1" height="1"/><rect x="289" y="266" width="1" height="1"/><rect x="290" y="266" width="1" height="1"/><rect x="287" y="267" width="1" height="1"/><rect x="289" y="267" width="1" height="1"/><rect x="290" y="267" width="1" height="1"/><rect x="288" y="268" width="1" height="1"/><rect x="289" y="268" width="1" height="1"/>
<rect x="339" y="325" width="1" height="1"/><rect x="350" y="325" width="1" height="1"/><rect x="340" y="326" width="1" height="1"/><rect x="341" y="326" width="1" height="1"/><rect x="348" y="326" width="1" height="1"/><rect x="349" y="326" width="1" height="1"/><rect x="340" y="327" width="1" height="1"/><rect x="342" y="327" width="1" height="1"/><rect x="347" y="327" width="1" height="1"/><rect x="348" y="327" width="1" height="1"/><rect x="349" y="327" width="1" height="1"/><rect x="341" y="328" width="1" height="1"/><rect x="343" y="328" width="1" height="1"/><rect x="344" y="328" width="1" height="1"/><rect x="345" y="328" width="1" height="1"/><rect x="346" y="328" width="1" height="1"/><rect x="347" y="328" width="1" height="1"/><rect x="342" y="329" width="1" height="1"/><rect x="345" y="329" width="1" height="1"/><rect x="346" y="329" width="1" height="1"/><rect x="347" y="329" width="1" height="1"/><rect x="342" y="330" width="1" height="1"/><rect x="345" y="330" width="1" height="1"/><rect x="346" y="330" width="1" height="1"/><rect x="347" y="330" width="1" height="1"/><rect x="343" y="331" width="1" height="1"/><rect x="345" y="331" width="1" height="1"/><rect x="346" y="331" width="1" height="1"/><rect x="343" y="332" width="1" height="1"/><rect x="345" y="332" width="1" height="1"/><rect x="346" y="332" width="1" height="1"/><rect x="344" y="333" width="1" height="1"/><rect x="345" y="333" width="1" height="1"/>
<rect x="395" y="328" width="1" height="1"/><rect x="406" y="328" width="1" height="1"/><rect x="396" y="329" width="1" height="1"/><rect x="397" y="329" width="1" height="1"/><rect x="404" y="329" width="1" height="1"/><rect x="405" y="329" width="1" height="1"/><rect x="396" y="330" width="1" height="1"/><rect x="398" y="330" width="1" height="1"/><rect x="403" y="330" width="1" height="1"/><rect x="404" y="330" width="1" height="1"/><rect x="405" y="330" width="1" height="1"/><rect x="397" y="331" width="1" height="1"/><rect x="399" y="331" width="1" height="1"/><rect x="400" y="331" width="1" height="1"/><rect x="401" y="331" width="1" height="1"/><rect x="402" y="331" width="1" height="1"/><rect x="403" y="331" width="1" height="1"/><rect x="398" y="332" width="1" height="1"/><rect x="401" y="332" width="1" height="1"/><rect x="402" y="332" width="1" height="1"/><rect x="403" y="332" width="1" height="1"/><rect x="398" y="333" width="1" height="1"/><rect x="401" y="333" width="1" height="1"/><rect x="402" y="333" width="1" height="1"/><rect x="403" y="333" width="1" height="1"/><rect x="399" y="334" width="1" height="1"/><rect x="401" y="334" width="1" height="1"/><rect x="402" y="334" width="1" height="1"/><rect x="399" y="335" width="1" height="1"/><rect x="401" y="335" width="1" height="1"/><rect x="402" y="335" width="1" height="1"/><rect x="400" y="336" width="1" height="1"/><rect x="401" y="336" width="1" height="1"/>
<rect x="451" y="379" width="1" height="1"/><rect x="462" y="379" width="1" height="1"/><rect x="452" y="380" width="1" height="1"/><rect x="453" y="380" width="1" height="1"/><rect x="460" y="380" width="1" height="1"/><rect x="461" y="380" width="1" height="1"/><rect x="452" y="381" width="1" height="1"/><rect x="454" y="381" width="1" height="1"/><rect x="459" y="381" width="1" height="1"/><rect x="460" y="381" width="1" height="1"/><rect x="461" y="381" width="1" height="1"/><rect x="453" y="382" width="1" height="1"/><rect x="455" y="382" width="1" height="1"/><rect x="456" y="382" width="1" height="1"/><rect x="457" y="382" width="1" height="1"/><rect x="458" y="382" width="1" height="1"/><rect x="459" y="382" width="1" height="1"/><rect x="454" y="383" width="1" height="1"/><rect x="457" y="383" width="1" height="1"/><rect x="458" y="383" width="1" height="1"/><rect x="459" y="383" width="1" height="1"/><rect x="454" y="384" width="1" height="1"/><rect x="457" y="384" width="1" height="1"/><rect x="458" y="384" width="1" height="1"/><rect x="459" y="384" width="1" height="1"/><rect x="455" y="385" width="1" height="1"/><rect x="457" y="385" width="1" height="1"/><rect x="458" y="385" width="1" height="1"/><rect x="455" y="386" width="1" height="1"/><rect x="457" y="386" width="1" height="1"/><rect x="458" y="386" width="1" height="1"/><rect x="456" y="387" width="1" height="1"/><rect x="457" y="387" width="1" height="1"/>
<rect x="491" y="336" width="1" height="1"/><rect x="502" y="336" width="1" height="1"/><rect x="492" y="337" width="1" height="1"/><rect x="493" y="337" width="1" height="1"/><rect x="500" y="337" width="1" height="1"/><rect x="501" y="337" width="1" height="1"/><rect x="492" y="338" width="1" height="1"/><rect x="494" y="338" width="1" height="1"/><rect x="499" y="338" width="1" height="1"/><rect x="500" y="338" width="1" height="1"/><rect x="501" y="338" width="1" height="1"/><rect x="493" y="339" width="1" height="1"/><rect x="495" y="339" width="1" height="1"/><rect x="496" y="339" width="1" height="1"/><rect x="497" y="339" width="1" height="1"/><rect x="498" y="339" width="1" height="1"/><rect x="499" y="339" width="1" height="1"/><rect x="494" y="340" width="1" height="1"/><rect x="497" y="340" width="1" height="1"/><rect x="498" y="340" width="1" height="1"/><rect x="499" y="340" width="1" height="1"/><rect x="494" y="341" width="1" height="1"/><rect x="497" y="341" width="1" height="1"/><rect x="498" y="341" width="1" height="1"/><rect x="499" y="341" width="1" height="1"/><rect x="495" y="342" width="1" height="1"/><rect x="497" y="342" width="1" height="1"/><rect x="498" y="342" width="1" height="1"/><rect x="495" y="343" width="1" height="1"/><rect x="497" y="343" width="1" height="1"/><rect x="498" y="343" width="1" height="1"/><rect x="496" y="344" width="1" height="1"/><rect x="497" y="344" width="1" height="1"/>
<rect x="611" y="248" width="1" height="1"/><rect x="622" y="248" width="1" height="1"/><rect x="612" y="249" width="1" height="1"/><rect x="613" y="249" width="1" height="1"/><rect x="620" y="249" width="1" height="1"/><rect x="621" y="249" width="1" height="1"/><rect x="612" y="250" width="1" height="1"/><rect x="614" y="250" width="1" height="1"/><rect x="619" y="250" width="1" height="1"/><rect x="620" y="250" width="1" height="1"/><rect x="621" y="250" width="1" height="1"/><rect x="613" y="251" width="1" height="1"/><rect x="615" y="251" width="1" height="1"/><rect x="616" y="251" width="1" height="1"/><rect x="617" y="251" width="1" height="1"/><rect x="618" y="251" width="1" height="1"/><rect x="619" y="251" width="1" height="1"/><rect x="614" y="252" width="1" height="1"/><rect x="617" y="252" width="1" height="1"/><rect x="618" y="252" width="1" height="1"/><rect x="619" y="252" width="1" height="1"/><rect x="614" y="253" width="1" height="1"/><rect x="617" y="253" width="1" height="1"/><rect x="618" y="253" width="1" height="1"/><rect x="619" y="253" width="1" height="1"/><rect x="615" y="254" width="1" height="1"/><rect x="617" y="254" width="1" height="1"/><rect x="618" y="254" width="1" height="1"/><rect x="615" y="255" width="1" height="1"/><rect x="617" y="255" width="1" height="1"/><rect x="618" y="255" width="1" height="1"/><rect x="616" y="256" width="1" height="1"/><rect x="617" y="256" width="1" height="1"/>
<rect x="651" y="266" width="1" height="1"/><rect x="662" y="266" width="1" height="1"/><rect x="652" y="267" width="1" height="1"/><rect x="653" y="267" width="1" height="1"/><rect x="660" y="267" width="1" height="1"/><rect x="661" y="267" width="1" height="1"/><rect x="652" y="268" width="1" height="1"/><rect x="654" y="268" width="1" height="1"/><rect x="659" y="268" width="1" height="1"/><rect x="660" y="268" width="1" height="1"/><rect x="661" y="268" width="1" height="1"/><rect x="653" y="269" width="1" height="1"/><rect x="655" y="269" width="1" height="1"/><rect x="656" y="269" width="1" height="1"/><rect x="657" y="269" width="1" height="1"/><rect x="658" y="269" width="1" height="1"/><rect x="659" y="269" width="1" height="1"/><rect x="654" y="270" width="1" height="1"/><rect x="657" y="270" width="1" height="1"/><rect x="658" y="270" width="1" height="1"/><rect x="659" y="270" width="1" height="1"/><rect x="654" y="271" width="1" height="1"/><rect x="657" y="271" width="1" height="1"/><rect x="658" y="271" width="1" height="1"/><rect x="659" y="271" width="1" height="1"/><rect x="655" y="272" width="1" height="1"/><rect x="657" y="272" width="1" height="1"/><rect x="658" y="272" width="1" height="1"/><rect x="655" y="273" width="1" height="1"/><rect x="657" y="273" width="1" height="1"/><rect x="658" y="273" width="1" height="1"/><rect x="656" y="274" width="1" height="1"/><rect x="657" y="274" width="1" height="1"/>
<rect x="739" y="328" width="1" height="1"/><rect x="750" y="328" width="1" height="1"/><rect x="740" y="329" width="1" height="1"/><rect x="741" y="329" width="1" height="1"/><rect x="748" y="329" width="1" height="1"/><rect x="749" y="329" width="1" height="1"/><rect x="740" y="330" width="1" height="1"/><rect x="742" y="330" width="1" height="1"/><rect x="747" y="330" width="1" height="1"/><rect x="748" y="330" width="1" height="1"/><rect x="749" y="330" width="1" height="1"/><rect x="741" y="331" width="1" height="1"/><rect x="743" y="331" width="1" height="1"/><rect x="744" y="331" width="1" height="1"/><rect x="745" y="331" width="1" height="1"/><rect x="746" y="331" width="1" height="1"/><rect x="747" y="331" width="1" height="1"/><rect x="742" y="332" width="1" height="1"/><rect x="745" y="332" width="1" height="1"/><rect x="746" y="332" width="1" height="1"/><rect x="747" y="332" width="1" height="1"/><rect x="742" y="333" width="1" height="1"/><rect x="745" y="333" width="1" height="1"/><rect x="746" y="333" width="1" height="1"/><rect x="747" y="333" width="1" height="1"/><rect x="743" y="334" width="1" height="1"/><rect x="745" y="334" width="1" height="1"/><rect x="746" y="334" width="1" height="1"/><rect x="743" y="335" width="1" height="1"/><rect x="745" y="335" width="1" height="1"/><rect x="746" y="335" width="1" height="1"/><rect x="744" y="336" width="1" height="1"/><rect x="745" y="336" width="1" height="1"/>
<rect x="883" y="574" width="1" height="1"/><rect x="894" y="574" width="1" height="1"/><rect x="884" y="575" width="1" height="1"/><rect x="885" y="575" width="1" height="1"/><rect x="892" y="575" width="1" height="1"/><rect x="893" y="575" width="1" height="1"/><rect x="884" y="576" width="1" height="1"/><rect x="886" y="576" width="1" height="1"/><rect x="891" y="576" width="1" height="1"/><rect x="892" y="576" width="1" height="1"/><rect x="893" y="576" width="1" height="1"/><rect x="885" y="577" width="1" height="1"/><rect x="887" y="577" width="1" height="1"/><rect x="888" y="577" width="1" height="1"/><rect x="889" y="577" width="1" height="1"/><rect x="890" y="577" width="1" height="1"/><rect x="891" y="577" width="1" height="1"/><rect x="886" y="578" width="1" height="1"/><rect x="889" y="578" width="1" height="1"/><rect x="890" y="578" width="1" height="1"/><rect x="891" y="578" width="1" height="1"/><rect x="886" y="579" width="1" height="1"/><rect x="889" y="579" width="1" height="1"/><rect x="890" y="579" width="1" height="1"/><rect x="891" y="579" width="1" height="1"/><rect x="887" y="580" width="1" height="1"/><rect x="889" y="580" width="1" height="1"/><rect x="890" y="580" width="1" height="1"/><rect x="887" y="581" width="1" height="1"/><rect x="889" y="581" width="1" height="1"/><rect x="890" y="581" width="1" height="1"/><rect x="888" y="582" width="1" height="1"/><rect x="889" y="582" width="1" height="1"/>
<rect x="915" y="631" width="1" height="1"/><rect x="926" y="631" width="1" height="1"/><rect x="916" y="632" width="1" height="1"/><rect x="917" y="632" width="1" height="1"/><rect x="924" y="632" width="1" height="1"/><rect x="925" y="632" width="1" height="1"/><rect x="916" y="633" width="1" height="1"/><rect x="918" y="633" width="1" height="1"/><rect x="923" y="633" width="1" height="1"/><rect x="924" y="633" width="1" height="1"/><rect x="925" y="633" width="1" height="1"/><rect x="917" y="634" width="1" height="1"/><rect x="919" y="634" width="1" height="1"/><rect x="920" y="634" width="1" height="1"/><rect x="921" y="634" width="1" height="1"/><rect x="922" y="634" width="1" height="1"/><rect x="923" y="634" width="1" height="1"/><rect x="918" y="635" width="1" height="1"/><rect x="921" y="635" width="1" height="1"/><rect x="922" y="635" width="1" height="1"/><rect x="923" y="635" width="1" height="1"/><rect x="918" y="636" width="1" height="1"/><rect x="921" y="636" width="1" height="1"/><rect x="922" y="636" width="1" height="1"/><rect x="923" y="636" width="1" height="1"/><rect x="919" y="637" width="1" height="1"/><rect x="921" y="637" width="1" height="1"/><rect x="922" y="637" width="1" height="1"/><rect x="919" y="638" width="1" height="1"/><rect x="921" y="638" width="1" height="1"/><rect x="922" y="638" width="1" height="1"/><rect x="920" y="639" width="1" height="1"/><rect x="921" y="639" width="1" height="1"/>
<rect x="947" y="663" width="1" height="1"/><rect x="958" y="663" width="1" height="1"/><rect x="948" y="664" width="1" height="1"/><rect x="949" y="664" width="1" height="1"/><rect x="956" y="664" width="1" height="1"/><rect x="957" y="664" width="1" height="1"/><rect x="948" y="665" width="1" height="1"/><rect x="950" y="665" width="1" height="1"/><rect x="955" y="665" width="1" height="1"/><rect x="956" y="665" width="1" height="1"/><rect x="957" y="665" width="1" height="1"/><rect x="949" y="666" width="1" height="1"/><rect x="951" y="666" width="1" height="1"/><rect x="952" y="666" width="1" height="1"/><rect x="953" y="666" width="1" height="1"/><rect x="954" y="666" width="1" height="1"/><rect x="955" y="666" width="1" height="1"/><rect x="950" y="667" width="1" height="1"/><rect x="953" y="667" width="1" height="1"/><rect x="954" y="667" width="1" height="1"/><rect x="955" y="667" width="1" height="1"/><rect x="950" y="668" width="1" height="1"/><rect x="953" y="668" width="1" height="1"/><rect x="954" y="668" width="1" height="1"/><rect x="955" y="668" width="1" height="1"/><rect x="951" y="669" width="1" height="1"/><rect x="953" y="669" width="1" height="1"/><rect x="954" y="669" width="1" height="1"/><rect x="951" y="670" width="1" height="1"/><rect x="953" y="670" width="1" height="1"/><rect x="954" y="670" width="1" height="1"/><rect x="952" y="671" width="1" height="1"/><rect x="953" y="671" width="1" height="1"/>
</g>
<polyline points="9.5,211.5 18.8,208.3 25.0,204.0 32.6,198.3 40.0,195.5 50.0,194.5 60.0,194.8 70.0,197.0 81.5,199.3 94.0,202.0 106.5,204.3 119.0,203.3 131.6,204.0 141.6,203.3 150.4,204.8 160.0,203.4 170.0,204.3 185.0,203.3 197.6,199.2 210.1,195.8 218.9,191.4 225.2,186.4 233.9,182.0 241.5,180.1 249.0,179.1 256.5,181.1 266.5,181.6 279.0,184.9 289.1,187.4 297.8,188.9 307.9,196.4 320.0,207.4 333.2,219.3 342.6,227.8 352.0,232.9 361.5,237.8 369.0,244.8 376.6,252.3 385.5,254.4 394.5,259.6 408.7,267.6 420.0,273.3 433.2,281.8 442.6,289.0 450.5,294.2 460.0,296.4 472.5,299.1 485.0,299.5 497.6,303.2 505.0,304.5 513.9,304.2 522.7,302.6 530.2,301.4 537.7,297.6 545.2,293.2 553.4,292.2 560.3,288.8 572.8,278.8 580.2,273.0 590.2,262.0 601.5,255.2 615.3,248.9 627.8,240.2 640.3,231.4 652.8,229.2 665.4,224.5 675.0,219.8 680.0,216.7 690.0,212.4 697.6,214.6 705.0,215.2 712.6,218.3 722.7,225.2 736.4,235.0 752.7,240.6 765.2,246.9 775.2,251.3 785.2,253.8 796.5,258.8 807.8,264.4 815.3,272.6 825.3,282.6 834.1,292.6 841.6,297.7 852.7,311.9 865.2,327.6 876.5,342.6 884.0,355.1 890.3,366.4 895.5,374.2 900.3,381.8 906.5,393.0 912.8,405.0 920.3,420.1 926.6,435.1 932.8,450.2 939.1,464.0 945.2,476.3 952.8,492.6 960.3,508.9 967.8,525.2 969.7,528.7" stroke="#0000ff" stroke-width="3" fill="none" stroke-linejoin="round" stroke-linecap="butt" shape-rendering="crispEdges"/>
<g shape-rendering="crispEdges" fill="#0000ff">
<rect x="609" y="150" width="624" height="1"/>
<rect x="609" y="270" width="624" height="1"/>
<rect x="609" y="344" width="624" height="1"/>
<rect x="609" y="405" width="624" height="1"/>
<rect x="609" y="465" width="624" height="1"/>
<rect x="609" y="660" width="624" height="1"/>
</g>
<path d="M609.5 150.5L961 660" stroke="#ff0000" stroke-width="1" stroke-dasharray="3 4" fill="none" shape-rendering="crispEdges"/>
<g shape-rendering="crispEdges" fill="#ff0000">
<rect x="9" y="464" width="1224" height="2"/>
<rect x="9" y="633" width="1224" height="2"/>
</g>
</g>
</svg>
<svg style="position:absolute;left:12px;top:116px" width="7" height="4" viewBox="0 0 7 4"><path d="M0 0H7L3.500 4Z" fill="#000"/></svg>
<svg style="position:absolute;left:980px;top:110px" width="11" height="6" viewBox="0 0 11 6"><path d="M0 0H11L5.500 5.500Z" fill="#778899"/></svg>
<div style="position:absolute;left:1234px;top:132px;width:2px;height:1px;background:#000;"></div>
<div style="position:absolute;left:1234px;top:166px;width:2px;height:1px;background:#000;"></div>
<div style="position:absolute;left:1234px;top:200px;width:2px;height:1px;background:#000;"></div>
<div style="position:absolute;left:1234px;top:234px;width:2px;height:1px;background:#000;"></div>
<div style="position:absolute;left:1234px;top:268px;width:2px;height:1px;background:#000;"></div>
<div style="position:absolute;left:1234px;top:302px;width:2px;height:1px;background:#000;"></div>
<div style="position:absolute;left:1234px;top:335px;width:2px;height:1px;background:#000;"></div>
<div style="position:absolute;left:1234px;top:369px;width:2px;height:1px;background:#000;"></div>
<div style="position:absolute;left:1234px;top:403px;width:2px;height:1px;background:#000;"></div>
<div style="position:absolute;left:1234px;top:437px;width:2px;height:1px;background:#000;"></div>
<div style="position:absolute;left:1234px;top:471px;width:2px;height:1px;background:#000;"></div>
<div style="position:absolute;left:1234px;top:505px;width:2px;height:1px;background:#000;"></div>
<div style="position:absolute;left:1234px;top:539px;width:2px;height:1px;background:#000;"></div>
<div style="position:absolute;left:1234px;top:572px;width:2px;height:1px;background:#000;"></div>
<div style="position:absolute;left:1234px;top:606px;width:2px;height:1px;background:#000;"></div>
<div style="position:absolute;left:1234px;top:640px;width:2px;height:1px;background:#000;"></div>
<div style="position:absolute;left:1234px;top:674px;width:2px;height:1px;background:#000;"></div>
<div style="position:absolute;left:9px;top:678px;width:1px;height:3px;background:#000;"></div>
<div style="position:absolute;left:73px;top:678px;width:1px;height:3px;background:#000;"></div>
<div style="position:absolute;left:137px;top:678px;width:1px;height:3px;background:#000;"></div>
<div style="position:absolute;left:201px;top:678px;width:1px;height:3px;background:#000;"></div>
<div style="position:absolute;left:265px;top:678px;width:1px;height:3px;background:#000;"></div>
<div style="position:absolute;left:329px;top:678px;width:1px;height:3px;background:#000;"></div>
<div style="position:absolute;left:393px;top:678px;width:1px;height:3px;background:#000;"></div>
<div style="position:absolute;left:457px;top:678px;width:1px;height:3px;background:#000;"></div>
<div style="position:absolute;left:521px;top:678px;width:1px;height:3px;background:#000;"></div>
<div style="position:absolute;left:585px;top:678px;width:1px;height:3px;background:#000;"></div>
<div style="position:absolute;left:649px;top:678px;width:1px;height:3px;background:#000;"></div>
<div style="position:absolute;left:713px;top:678px;width:1px;height:3px;background:#000;"></div>
<div style="position:absolute;left:777px;top:678px;width:1px;height:3px;background:#000;"></div>
<div style="position:absolute;left:841px;top:678px;width:1px;height:3px;background:#000;"></div>
<div style="position:absolute;left:905px;top:678px;width:1px;height:3px;background:#000;"></div>
<div style="position:absolute;left:969px;top:678px;width:1px;height:3px;background:#000;"></div>
<div style="position:absolute;left:4px;top:696px;width:1271px;height:1px;background:#f0f0f0;"></div>
<div style="position:absolute;left:4px;top:697px;width:1271px;height:1px;background:#000;"></div>
<div style="position:absolute;left:4px;top:698px;width:1271px;height:19px;background:#dddddd;"></div>
<div style="position:absolute;left:4px;top:717px;width:1271px;height:1px;background:#f8f8f8;"></div>
<div style="position:absolute;left:1273px;top:698px;width:2px;height:40px;background:#f6f6f6;"></div>
<div style="position:absolute;left:5px;top:698px;width:1px;height:18px;background:#78786a;"></div>
<div style="position:absolute;left:184px;top:697px;width:92px;height:19px;background:#fff;border:1px solid #000;border-top:none"></div>
<div style="position:absolute;left:96px;top:701px;width:1px;height:13px;background:#74746a;"></div>
<div style="position:absolute;left:364px;top:701px;width:1px;height:13px;background:#74746a;"></div>
<div style="position:absolute;left:452px;top:701px;width:1px;height:13px;background:#74746a;"></div>
<div style="position:absolute;left:528px;top:701px;width:1px;height:13px;background:#74746a;"></div>
<div style="position:absolute;left:616px;top:701px;width:1px;height:13px;background:#74746a;"></div>
<div style="position:absolute;left:704px;top:701px;width:1px;height:13px;background:#74746a;"></div>
<div style="position:absolute;left:792px;top:701px;width:1px;height:13px;background:#74746a;"></div>
<div style="position:absolute;left:884px;top:701px;width:1px;height:13px;background:#74746a;"></div>
<svg style="position:absolute;left:1246px;top:704px" width="24" height="6" viewBox="0 0 24 6"><path d="M4 0v6l-3.500-3zM18 0v6l3.500-3z" fill="#9a9a9a"/></svg>
<div style="position:absolute;left:4px;top:718px;width:1269px;height:20px;background:#e1e1e1;"></div>
<div style="position:absolute;left:554px;top:720px;width:1px;height:16px;background:#a0a0a0;"></div>
<div style="position:absolute;left:555px;top:720px;width:1px;height:16px;background:#fff;"></div>
<div style="position:absolute;left:663px;top:720px;width:1px;height:16px;background:#a0a0a0;"></div>
<div style="position:absolute;left:664px;top:720px;width:1px;height:16px;background:#fff;"></div>
<div style="position:absolute;left:764px;top:720px;width:1px;height:16px;background:#a0a0a0;"></div>
<div style="position:absolute;left:765px;top:720px;width:1px;height:16px;background:#fff;"></div>
<div style="position:absolute;left:836px;top:720px;width:1px;height:16px;background:#a0a0a0;"></div>
<div style="position:absolute;left:837px;top:720px;width:1px;height:16px;background:#fff;"></div>
<div style="position:absolute;left:907px;top:720px;width:1px;height:16px;background:#a0a0a0;"></div>
<div style="position:absolute;left:908px;top:720px;width:1px;height:16px;background:#fff;"></div>
<div style="position:absolute;left:978px;top:720px;width:1px;height:16px;background:#a0a0a0;"></div>
<div style="position:absolute;left:979px;top:720px;width:1px;height:16px;background:#fff;"></div>
<div style="position:absolute;left:1049px;top:720px;width:1px;height:16px;background:#a0a0a0;"></div>
<div style="position:absolute;left:1050px;top:720px;width:1px;height:16px;background:#fff;"></div>
<div style="position:absolute;left:1110px;top:720px;width:1px;height:16px;background:#a0a0a0;"></div>
<div style="position:absolute;left:1111px;top:720px;width:1px;height:16px;background:#fff;"></div>
<svg style="position:absolute;left:1118.500px;top:723.400px" width="25" height="12" viewBox="0 0 25 12"><rect x="0.00" y="0" width="1.500" height="10.50" fill="#6a8a1e"/><rect x="0.00" y="10.50" width="1.500" height="1.50" fill="#8e1410"/><rect x="2.45" y="0" width="1.500" height="9.45" fill="#6a8a1e"/><rect x="2.45" y="9.45" width="1.500" height="2.55" fill="#8e1410"/><rect x="4.90" y="0" width="1.500" height="8.40" fill="#6a8a1e"/><rect x="4.90" y="8.40" width="1.500" height="3.60" fill="#8e1410"/><rect x="7.35" y="0" width="1.500" height="7.35" fill="#6a8a1e"/><rect x="7.35" y="7.35" width="1.500" height="4.65" fill="#8e1410"/><rect x="9.80" y="0" width="1.500" height="6.30" fill="#6a8a1e"/><rect x="9.80" y="6.30" width="1.500" height="5.70" fill="#8e1410"/><rect x="12.25" y="0" width="1.500" height="5.25" fill="#6a8a1e"/><rect x="12.25" y="5.25" width="1.500" height="6.75" fill="#8e1410"/><rect x="14.70" y="0" width="1.500" height="4.20" fill="#6a8a1e"/><rect x="14.70" y="4.20" width="1.500" height="7.80" fill="#8e1410"/><rect x="17.15" y="0" width="1.500" height="3.15" fill="#6a8a1e"/><rect x="17.15" y="3.15" width="1.500" height="8.85" fill="#8e1410"/><rect x="19.60" y="0" width="1.500" height="2.10" fill="#6a8a1e"/><rect x="19.60" y="2.10" width="1.500" height="9.90" fill="#8e1410"/><rect x="22.05" y="0" width="1.500" height="1.05" fill="#6a8a1e"/><rect x="22.05" y="1.05" width="1.500" height="10.95" fill="#8e1410"/></svg>
<svg style="position:absolute;left:1259px;top:723px" width="15" height="15" viewBox="0 0 15 15"><path d="M15 0L0 15M15 4L4 15M15 8L8 15M15 12L12 15" stroke="#fff" stroke-width="1.400"/><path d="M15 1.500L1.500 15M15 5.500L5.500 15M15 9.500L9.500 15M15 13.500L13.500 15" stroke="#a4a4a4" stroke-width="1.200"/></svg>
<div style="position:absolute;left:0;top:0;width:1279px;height:742px;will-change:transform">
<div style="position:absolute;left:26.5px;top:9px;font-size:12px;line-height:16px;height:16px;white-space:pre;color:#fff;font-weight:bold;letter-spacing:0.030px;text-shadow:0 0 1px #000,0 0 2px #000,0 1px 2px #000;">142420: MetaTrader4 - RoboForex - [AUDUSD,Daily]</div>
<div style="position:absolute;left:31px;top:34px;font-size:11px;line-height:14px;height:14px;white-space:pre;color:#000;letter-spacing:0.319px;-webkit-text-stroke:0.2px #000;">Файл</div>
<div style="position:absolute;left:75px;top:34px;font-size:11px;line-height:14px;height:14px;white-space:pre;color:#000;letter-spacing:-0.950px;-webkit-text-stroke:0.2px #000;">Вид</div>
<div style="position:absolute;left:110px;top:34px;font-size:11px;line-height:14px;height:14px;white-space:pre;color:#000;letter-spacing:0.186px;-webkit-text-stroke:0.2px #000;">Вставка</div>
<div style="position:absolute;left:168px;top:34px;font-size:11px;line-height:14px;height:14px;white-space:pre;color:#000;letter-spacing:0.046px;-webkit-text-stroke:0.2px #000;">Графики</div>
<div style="position:absolute;left:228px;top:34px;font-size:11px;line-height:14px;height:14px;white-space:pre;color:#000;letter-spacing:-0.133px;-webkit-text-stroke:0.2px #000;">Сервис</div>
<div style="position:absolute;left:281px;top:34px;font-size:11px;line-height:14px;height:14px;white-space:pre;color:#000;letter-spacing:0.146px;-webkit-text-stroke:0.2px #000;">Окно</div>
<div style="position:absolute;left:323px;top:34px;font-size:11px;line-height:14px;height:14px;white-space:pre;color:#000;letter-spacing:-0.025px;-webkit-text-stroke:0.2px #000;">Справка</div>
<div style="position:absolute;left:263.5px;top:59px;font-size:11px;line-height:14px;height:14px;white-space:pre;color:#000;letter-spacing:-0.159px;-webkit-text-stroke:0.2px #000;">Новый Ордер</div>
<div style="position:absolute;left:392.5px;top:59px;font-size:11px;line-height:14px;height:14px;white-space:pre;color:#000;letter-spacing:0.156px;-webkit-text-stroke:0.2px #000;">Советники</div>
<div style="position:absolute;left:1257px;top:58px;font-size:11px;line-height:12px;height:12px;white-space:pre;color:#fff;-webkit-text-stroke:0.2px #fff;">4</div>
<div style="position:absolute;left:550px;top:86px;font-size:13px;line-height:15px;height:15px;white-space:pre;color:#555;font-weight:bold;">A</div>
<div style="position:absolute;left:654.5px;top:88px;font-size:9.5px;line-height:12px;height:12px;white-space:pre;color:#484848;letter-spacing:-0.497px;-webkit-text-stroke:0.2px #484848;">M1</div>
<div style="position:absolute;left:682.5px;top:88px;font-size:9.5px;line-height:12px;height:12px;white-space:pre;color:#484848;letter-spacing:-0.497px;-webkit-text-stroke:0.2px #484848;">M5</div>
<div style="position:absolute;left:708.8px;top:88px;font-size:9.5px;line-height:12px;height:12px;white-space:pre;color:#484848;letter-spacing:-0.740px;-webkit-text-stroke:0.2px #484848;">M15</div>
<div style="position:absolute;left:736.6px;top:88px;font-size:9.5px;line-height:12px;height:12px;white-space:pre;color:#484848;letter-spacing:-0.390px;-webkit-text-stroke:0.2px #484848;">M30</div>
<div style="position:absolute;left:767.4px;top:88px;font-size:9.5px;line-height:12px;height:12px;white-space:pre;color:#484848;letter-spacing:-0.344px;-webkit-text-stroke:0.2px #484848;">H1</div>
<div style="position:absolute;left:794.5px;top:88px;font-size:9.5px;line-height:12px;height:12px;white-space:pre;color:#484848;letter-spacing:0.156px;-webkit-text-stroke:0.2px #484848;">H4</div>
<div style="position:absolute;left:823.6px;top:88px;font-size:9.5px;line-height:12px;height:12px;white-space:pre;color:#484848;letter-spacing:-0.744px;-webkit-text-stroke:0.2px #484848;">D1</div>
<div style="position:absolute;left:850.6px;top:88px;font-size:9.5px;line-height:12px;height:12px;white-space:pre;color:#484848;letter-spacing:0.350px;-webkit-text-stroke:0.2px #484848;">W1</div>
<div style="position:absolute;left:877.7px;top:88px;font-size:9.5px;line-height:12px;height:12px;white-space:pre;color:#484848;letter-spacing:-0.374px;-webkit-text-stroke:0.2px #484848;">MN</div>
<div style="position:absolute;left:24px;top:112px;font-size:9px;line-height:11px;height:11px;white-space:pre;color:#000;letter-spacing:0.272px;-webkit-text-stroke:0.25px #000;">AUDUSD,Daily</div>
<div style="position:absolute;left:96px;top:112px;font-size:9px;line-height:11px;height:11px;white-space:pre;color:#000;letter-spacing:0.073px;-webkit-text-stroke:0.25px #000;">0.9660 0.9683 0.9547 0.9570</div>
<div style="position:absolute;left:1239.2px;top:126.6px;font-size:9px;line-height:11px;height:11px;white-space:pre;color:#000;letter-spacing:-0.205px;-webkit-text-stroke:0.25px #000;">1.0615</div>
<div style="position:absolute;left:1239.2px;top:160.6px;font-size:9px;line-height:11px;height:11px;white-space:pre;color:#000;letter-spacing:-0.205px;-webkit-text-stroke:0.25px #000;">1.0545</div>
<div style="position:absolute;left:1239.2px;top:194.6px;font-size:9px;line-height:11px;height:11px;white-space:pre;color:#000;letter-spacing:-0.205px;-webkit-text-stroke:0.25px #000;">1.0475</div>
<div style="position:absolute;left:1239.2px;top:228.6px;font-size:9px;line-height:11px;height:11px;white-space:pre;color:#000;letter-spacing:-0.205px;-webkit-text-stroke:0.25px #000;">1.0405</div>
<div style="position:absolute;left:1239.2px;top:262.6px;font-size:9px;line-height:11px;height:11px;white-space:pre;color:#000;letter-spacing:-0.205px;-webkit-text-stroke:0.25px #000;">1.0335</div>
<div style="position:absolute;left:1239.2px;top:296.6px;font-size:9px;line-height:11px;height:11px;white-space:pre;color:#000;letter-spacing:-0.205px;-webkit-text-stroke:0.25px #000;">1.0265</div>
<div style="position:absolute;left:1239.2px;top:329.6px;font-size:9px;line-height:11px;height:11px;white-space:pre;color:#000;letter-spacing:-0.205px;-webkit-text-stroke:0.25px #000;">1.0195</div>
<div style="position:absolute;left:1239.2px;top:363.6px;font-size:9px;line-height:11px;height:11px;white-space:pre;color:#000;letter-spacing:-0.205px;-webkit-text-stroke:0.25px #000;">1.0125</div>
<div style="position:absolute;left:1239.2px;top:397.6px;font-size:9px;line-height:11px;height:11px;white-space:pre;color:#000;letter-spacing:-0.205px;-webkit-text-stroke:0.25px #000;">1.0055</div>
<div style="position:absolute;left:1238.5px;top:431.6px;font-size:9px;line-height:11px;height:11px;white-space:pre;color:#000;letter-spacing:-0.065px;-webkit-text-stroke:0.25px #000;">0.9985</div>
<div style="position:absolute;left:1238.5px;top:465.6px;font-size:9px;line-height:11px;height:11px;white-space:pre;color:#000;letter-spacing:-0.065px;-webkit-text-stroke:0.25px #000;">0.9915</div>
<div style="position:absolute;left:1238.5px;top:499.6px;font-size:9px;line-height:11px;height:11px;white-space:pre;color:#000;letter-spacing:-0.065px;-webkit-text-stroke:0.25px #000;">0.9845</div>
<div style="position:absolute;left:1238.5px;top:533.6px;font-size:9px;line-height:11px;height:11px;white-space:pre;color:#000;letter-spacing:-0.065px;-webkit-text-stroke:0.25px #000;">0.9775</div>
<div style="position:absolute;left:1238.5px;top:566.6px;font-size:9px;line-height:11px;height:11px;white-space:pre;color:#000;letter-spacing:-0.065px;-webkit-text-stroke:0.25px #000;">0.9705</div>
<div style="position:absolute;left:1238.5px;top:600.6px;font-size:9px;line-height:11px;height:11px;white-space:pre;color:#000;letter-spacing:-0.065px;-webkit-text-stroke:0.25px #000;">0.9635</div>
<div style="position:absolute;left:1238.5px;top:668.6px;font-size:9px;line-height:11px;height:11px;white-space:pre;color:#000;letter-spacing:-0.065px;-webkit-text-stroke:0.25px #000;">0.9495</div>
<div style="position:absolute;left:1218.8px;top:139px;font-size:9px;line-height:11px;height:11px;white-space:pre;color:#0000ff;letter-spacing:-0.006px;-webkit-text-stroke:0.25px #0000ff;">0.0</div>
<div style="position:absolute;left:1213.7px;top:259px;font-size:9px;line-height:11px;height:11px;white-space:pre;color:#0000ff;letter-spacing:0.028px;-webkit-text-stroke:0.25px #0000ff;">23.6</div>
<div style="position:absolute;left:1213.7px;top:333px;font-size:9px;line-height:11px;height:11px;white-space:pre;color:#0000ff;letter-spacing:0.028px;-webkit-text-stroke:0.25px #0000ff;">38.2</div>
<div style="position:absolute;left:1213.7px;top:394px;font-size:9px;line-height:11px;height:11px;white-space:pre;color:#0000ff;letter-spacing:0.028px;-webkit-text-stroke:0.25px #0000ff;">50.0</div>
<div style="position:absolute;left:1213.7px;top:454px;font-size:9px;line-height:11px;height:11px;white-space:pre;color:#0000ff;letter-spacing:0.028px;-webkit-text-stroke:0.25px #0000ff;">61.8</div>
<div style="position:absolute;left:1209.3px;top:649px;font-size:9px;line-height:11px;height:11px;white-space:pre;color:#0000ff;letter-spacing:-0.130px;-webkit-text-stroke:0.25px #0000ff;">100.0</div>
<div style="position:absolute;left:1236px;top:632px;width:34px;height:11px;background:#000;"></div>
<div style="position:absolute;left:1236px;top:639px;width:37px;height:4px;overflow:hidden"><div style="position:absolute;left:2.5px;top:-6.5px;font-size:9px;line-height:11px;height:11px;white-space:pre;color:#fff;letter-spacing:-0.065px;-webkit-text-stroke:0.25px #fff;">0.9570</div></div>
<div style="position:absolute;left:1236px;top:459px;width:34px;height:11px;background:#ff0000;"></div>
<div style="position:absolute;left:1238.5px;top:459.5px;font-size:9px;line-height:11px;height:11px;white-space:pre;color:#fff;letter-spacing:-0.065px;-webkit-text-stroke:0.25px #fff;">0.9927</div>
<div style="position:absolute;left:1236px;top:628px;width:34px;height:11px;background:#ff0000;"></div>
<div style="position:absolute;left:1238.5px;top:628.5px;font-size:9px;line-height:11px;height:11px;white-space:pre;color:#fff;letter-spacing:-0.065px;-webkit-text-stroke:0.25px #fff;">0.9579</div>
<div style="position:absolute;left:8.3px;top:681.5px;font-size:9px;line-height:11px;height:11px;white-space:pre;color:#000;letter-spacing:-0.054px;-webkit-text-stroke:0.25px #000;">12 Dec 2012</div>
<div style="position:absolute;left:71.3px;top:681.5px;font-size:9px;line-height:11px;height:11px;white-space:pre;color:#000;letter-spacing:0.046px;-webkit-text-stroke:0.25px #000;">24 Dec 2012</div>
<div style="position:absolute;left:135.3px;top:681.5px;font-size:9px;line-height:11px;height:11px;white-space:pre;color:#000;letter-spacing:-0.015px;-webkit-text-stroke:0.25px #000;">7 Jan 2013</div>
<div style="position:absolute;left:200.3px;top:681.5px;font-size:9px;line-height:11px;height:11px;white-space:pre;color:#000;letter-spacing:-0.114px;-webkit-text-stroke:0.25px #000;">17 Jan 2013</div>
<div style="position:absolute;left:263.4px;top:681.5px;font-size:9px;line-height:11px;height:11px;white-space:pre;color:#000;letter-spacing:-0.014px;-webkit-text-stroke:0.25px #000;">29 Jan 2013</div>
<div style="position:absolute;left:327.2px;top:681.5px;font-size:9px;line-height:11px;height:11px;white-space:pre;color:#000;letter-spacing:0.107px;-webkit-text-stroke:0.25px #000;">8 Feb 2013</div>
<div style="position:absolute;left:391.4px;top:681.5px;font-size:9px;line-height:11px;height:11px;white-space:pre;color:#000;letter-spacing:0.106px;-webkit-text-stroke:0.25px #000;">20 Feb 2013</div>
<div style="position:absolute;left:455.9px;top:681.5px;font-size:9px;line-height:11px;height:11px;white-space:pre;color:#000;letter-spacing:0.053px;-webkit-text-stroke:0.25px #000;">4 Mar 2013</div>
<div style="position:absolute;left:520.0px;top:681.5px;font-size:9px;line-height:11px;height:11px;white-space:pre;color:#000;letter-spacing:0.007px;-webkit-text-stroke:0.25px #000;">14 Mar 2013</div>
<div style="position:absolute;left:583.5px;top:681.5px;font-size:9px;line-height:11px;height:11px;white-space:pre;color:#000;letter-spacing:0.087px;-webkit-text-stroke:0.25px #000;">26 Mar 2013</div>
<div style="position:absolute;left:647.5px;top:681.5px;font-size:9px;line-height:11px;height:11px;white-space:pre;color:#000;letter-spacing:0.196px;-webkit-text-stroke:0.25px #000;">5 Apr 2013</div>
<div style="position:absolute;left:712.2px;top:681.5px;font-size:9px;line-height:11px;height:11px;white-space:pre;color:#000;letter-spacing:0.086px;-webkit-text-stroke:0.25px #000;">17 Apr 2013</div>
<div style="position:absolute;left:775.3px;top:681.5px;font-size:9px;line-height:11px;height:11px;white-space:pre;color:#000;letter-spacing:0.226px;-webkit-text-stroke:0.25px #000;">29 Apr 2013</div>
<div style="position:absolute;left:839.7px;top:681.5px;font-size:9px;line-height:11px;height:11px;white-space:pre;color:#000;letter-spacing:0.263px;-webkit-text-stroke:0.25px #000;">9 May 2013</div>
<div style="position:absolute;left:903.5px;top:681.5px;font-size:9px;line-height:11px;height:11px;white-space:pre;color:#000;letter-spacing:0.236px;-webkit-text-stroke:0.25px #000;">21 May 2013</div>
<div style="position:absolute;left:967.2px;top:681.5px;font-size:9px;line-height:11px;height:11px;white-space:pre;color:#000;letter-spacing:0.236px;-webkit-text-stroke:0.25px #000;">31 May 2013</div>
<div style="position:absolute;left:17px;top:700px;font-size:11px;line-height:13px;height:13px;white-space:pre;color:#74746a;letter-spacing:-0.541px;-webkit-text-stroke:0.2px #74746a;">EURUSD,Daily</div>
<div style="position:absolute;left:106px;top:700px;font-size:11px;line-height:13px;height:13px;white-space:pre;color:#74746a;letter-spacing:-0.633px;-webkit-text-stroke:0.2px #74746a;">GBPUSD,Daily</div>
<div style="position:absolute;left:196px;top:700px;font-size:11px;line-height:13px;height:13px;white-space:pre;color:#000;letter-spacing:-0.632px;-webkit-text-stroke:0.2px #000;">AUDUSD,Daily</div>
<div style="position:absolute;left:287px;top:700px;font-size:11px;line-height:13px;height:13px;white-space:pre;color:#74746a;letter-spacing:-0.499px;-webkit-text-stroke:0.2px #74746a;">USDJPY,Daily</div>
<div style="position:absolute;left:374px;top:700px;font-size:11px;line-height:13px;height:13px;white-space:pre;color:#74746a;letter-spacing:-0.557px;-webkit-text-stroke:0.2px #74746a;">GBPCHF,Daily</div>
<div style="position:absolute;left:462px;top:700px;font-size:11px;line-height:13px;height:13px;white-space:pre;color:#74746a;letter-spacing:-0.763px;-webkit-text-stroke:0.2px #74746a;">GBPJPY,H1</div>
<div style="position:absolute;left:538px;top:700px;font-size:11px;line-height:13px;height:13px;white-space:pre;color:#74746a;letter-spacing:-0.595px;-webkit-text-stroke:0.2px #74746a;">EURGBP,Daily</div>
<div style="position:absolute;left:627px;top:700px;font-size:11px;line-height:13px;height:13px;white-space:pre;color:#74746a;letter-spacing:-0.698px;-webkit-text-stroke:0.2px #74746a;">NZDUSD,M15</div>
<div style="position:absolute;left:715px;top:700px;font-size:11px;line-height:13px;height:13px;white-space:pre;color:#74746a;letter-spacing:-0.499px;-webkit-text-stroke:0.2px #74746a;">EURJPY,Daily</div>
<div style="position:absolute;left:803px;top:700px;font-size:11px;line-height:13px;height:13px;white-space:pre;color:#74746a;letter-spacing:-0.541px;-webkit-text-stroke:0.2px #74746a;">USDCAD,Daily</div>
<div style="position:absolute;left:6px;top:723px;font-size:11px;line-height:13px;height:13px;white-space:pre;color:#000;letter-spacing:-0.076px;-webkit-text-stroke:0.2px #000;">Для справки, нажмите F1</div>
<div style="position:absolute;left:668px;top:723px;font-size:11px;line-height:13px;height:13px;white-space:pre;color:#000;letter-spacing:0.091px;-webkit-text-stroke:0.2px #000;">2013.04.16 00:00</div>
<div style="position:absolute;left:770px;top:723px;font-size:11px;line-height:13px;height:13px;white-space:pre;color:#000;letter-spacing:-0.039px;-webkit-text-stroke:0.2px #000;">O: 1.0312</div>
<div style="position:absolute;left:841px;top:723px;font-size:11px;line-height:13px;height:13px;white-space:pre;color:#000;letter-spacing:0.037px;-webkit-text-stroke:0.2px #000;">H: 1.0395</div>
<div style="position:absolute;left:912px;top:723px;font-size:11px;line-height:13px;height:13px;white-space:pre;color:#000;letter-spacing:0.016px;-webkit-text-stroke:0.2px #000;">L: 1.0293</div>
<div style="position:absolute;left:982px;top:723px;font-size:11px;line-height:13px;height:13px;white-space:pre;color:#000;letter-spacing:0.037px;-webkit-text-stroke:0.2px #000;">C: 1.0389</div>
<div style="position:absolute;left:1054px;top:723px;font-size:11px;line-height:13px;height:13px;white-space:pre;color:#000;letter-spacing:-0.252px;-webkit-text-stroke:0.2px #000;">V: 7670</div>
<div style="position:absolute;left:1173px;top:723px;font-size:11px;line-height:13px;height:13px;white-space:pre;color:#000;letter-spacing:-0.181px;-webkit-text-stroke:0.2px #000;">18/0 kb</div>
</div>
</div></body></html>
